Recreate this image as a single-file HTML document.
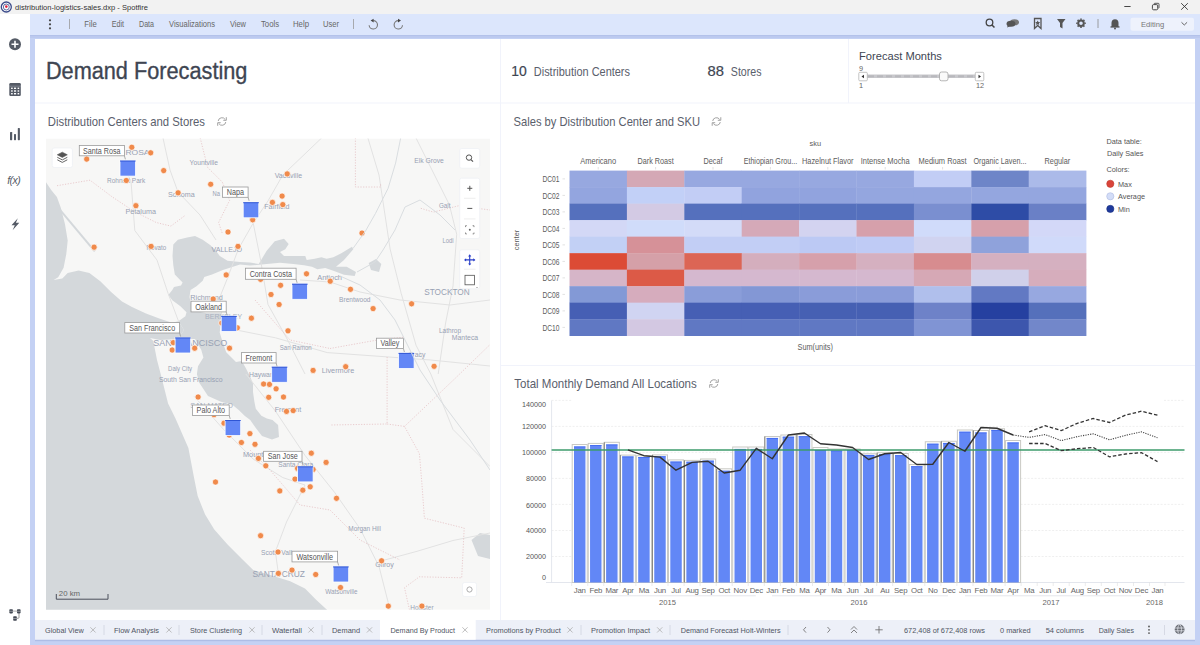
<!DOCTYPE html><html><head><meta charset="utf-8"><style>
html,body{margin:0;padding:0;width:1200px;height:645px;overflow:hidden;background:#fff;}
*{font-family:"Liberation Sans", sans-serif;}
svg{position:absolute;left:0;top:0;}
</style></head><body>
<svg width="1200" height="645" viewBox="0 0 1200 645" style="font-family:'Liberation Sans',sans-serif">
<rect x="0" y="0" width="1200" height="14" fill="#f2f2f2"/>
<rect x="0" y="14" width="30" height="631" fill="#ffffff"/>
<rect x="30" y="14" width="1170" height="21" fill="#dce6fc"/>
<rect x="30" y="35" width="1170" height="610" fill="#c4d1f4"/><rect x="30" y="35" width="1170" height="1.5" fill="#b3c2ea"/><rect x="30" y="36.5" width="1170" height="1.5" fill="#bccaef"/>
<rect x="35" y="39" width="1160" height="601" fill="#ffffff"/>
<circle cx="6.3" cy="7" r="5" fill="#fff" stroke="#3a4a8a" stroke-width="1.3"/>
<circle cx="6.3" cy="7" r="3" fill="none" stroke="#3a4a8a" stroke-width="0.8"/>
<circle cx="6.3" cy="6.6" r="1.3" fill="#e0203a"/>
<text x="15" y="10.2" font-size="8.1" fill="#333" text-anchor="start" font-weight="400" textLength="133" lengthAdjust="spacingAndGlyphs" >distribution-logistics-sales.dxp - Spotfire</text>
<line x1="1124.3" y1="6.5" x2="1130.6" y2="6.5" stroke="#333" stroke-width="0.9"/>
<rect x="1152.4" y="4.6" width="5.3" height="5.2" fill="none" stroke="#333" stroke-width="0.9" rx="1.2"/>
<path d="M1154 3.8 Q1154 3.3 1155 3.3 H1158.2 Q1159 3.3 1159 4.2 V7.5 Q1159 8.2 1158.3 8.2" fill="none" stroke="#333" stroke-width="0.8"/>
<path d="M1181.2 3.2 L1187.8 9.7 M1187.8 3.2 L1181.2 9.7" stroke="#333" stroke-width="0.9"/>
<circle cx="50" cy="20.3" r="1.1" fill="#444"/><circle cx="50" cy="24.3" r="1.1" fill="#444"/><circle cx="50" cy="28.3" r="1.1" fill="#444"/>
<line x1="69.5" y1="19" x2="69.5" y2="29" stroke="#999" stroke-width="0.8"/>
<text x="84.3" y="26.9" font-size="8.7" fill="#666" text-anchor="start" font-weight="400" textLength="12.4" lengthAdjust="spacingAndGlyphs" >File</text>
<text x="111.7" y="26.9" font-size="8.7" fill="#666" text-anchor="start" font-weight="400" textLength="12.3" lengthAdjust="spacingAndGlyphs" >Edit</text>
<text x="139" y="26.9" font-size="8.7" fill="#666" text-anchor="start" font-weight="400" textLength="15" lengthAdjust="spacingAndGlyphs" >Data</text>
<text x="169" y="26.9" font-size="8.7" fill="#666" text-anchor="start" font-weight="400" textLength="46" lengthAdjust="spacingAndGlyphs" >Visualizations</text>
<text x="230" y="26.9" font-size="8.7" fill="#666" text-anchor="start" font-weight="400" textLength="16" lengthAdjust="spacingAndGlyphs" >View</text>
<text x="261" y="26.9" font-size="8.7" fill="#666" text-anchor="start" font-weight="400" textLength="18" lengthAdjust="spacingAndGlyphs" >Tools</text>
<text x="293" y="26.9" font-size="8.7" fill="#666" text-anchor="start" font-weight="400" textLength="16" lengthAdjust="spacingAndGlyphs" >Help</text>
<text x="323" y="26.9" font-size="8.7" fill="#666" text-anchor="start" font-weight="400" textLength="16" lengthAdjust="spacingAndGlyphs" >User</text>
<line x1="353.5" y1="19" x2="353.5" y2="29" stroke="#999" stroke-width="0.8"/>
<path d="M373.3 20.6 A4.2 4.2 0 1 1 369.1 25.2" fill="none" stroke="#777" stroke-width="1.1"/><path d="M373.6 18.8 V22.4 L370.6 20.6 Z" fill="#444"/>
<path d="M398.3 20.6 A4.2 4.2 0 1 0 402.5 25.2" fill="none" stroke="#777" stroke-width="1.1"/><path d="M398 18.8 V22.4 L401 20.6 Z" fill="#444"/>
<circle cx="989.5" cy="22.5" r="3.3" fill="none" stroke="#444" stroke-width="1.3"/><line x1="992" y1="25" x2="994.5" y2="27.5" stroke="#444" stroke-width="1.5"/>
<ellipse cx="1014.5" cy="22.3" rx="4.5" ry="3" fill="#777"/><ellipse cx="1011" cy="23.8" rx="4.5" ry="3" fill="#555"/><path d="M1008 25 L1007 27.5 L1011 26" fill="#555"/>
<path d="M1034.5 18.5 H1041 V28.5 L1037.7 25.5 L1034.5 28.5 Z" fill="none" stroke="#555" stroke-width="1.3"/><path d="M1037.7 20.5 l0.8 1.6 1.7 0.2 -1.3 1.1 0.4 1.7 -1.6 -0.9 -1.6 0.9 0.4 -1.7 -1.3 -1.1 1.7 -0.2z" fill="#555"/>
<path d="M1057 19 H1065.5 L1062.5 23 V28.5 L1060 27 V23 Z" fill="#555"/>
<circle cx="1081" cy="23.3" r="2.8" fill="none" stroke="#555" stroke-width="2"/>
<line x1="1084.50" y1="23.30" x2="1085.80" y2="23.30" stroke="#555" stroke-width="1.6"/>
<line x1="1083.47" y1="25.77" x2="1084.39" y2="26.69" stroke="#555" stroke-width="1.6"/>
<line x1="1081.00" y1="26.80" x2="1081.00" y2="28.10" stroke="#555" stroke-width="1.6"/>
<line x1="1078.53" y1="25.77" x2="1077.61" y2="26.69" stroke="#555" stroke-width="1.6"/>
<line x1="1077.50" y1="23.30" x2="1076.20" y2="23.30" stroke="#555" stroke-width="1.6"/>
<line x1="1078.53" y1="20.83" x2="1077.61" y2="19.91" stroke="#555" stroke-width="1.6"/>
<line x1="1081.00" y1="19.80" x2="1081.00" y2="18.50" stroke="#555" stroke-width="1.6"/>
<line x1="1083.47" y1="20.83" x2="1084.39" y2="19.91" stroke="#555" stroke-width="1.6"/>
<line x1="1098" y1="19" x2="1098" y2="28" stroke="#888" stroke-width="0.8"/>
<path d="M1111.5 27 V23 A3.5 3.8 0 0 1 1118.5 23 V27 Z" fill="#555"/><rect x="1110.5" y="26.3" width="9" height="1.3" fill="#555"/><circle cx="1115" cy="28.5" r="1" fill="#555"/>
<rect x="1130.5" y="17.7" width="63.5" height="13" rx="2" fill="#eef2fc"/>
<text x="1141" y="26.6" font-size="7.6" fill="#777" text-anchor="start" font-weight="400" >Editing</text>
<path d="M1181.5 22.3 L1184.3 25 L1187.1 22.3" fill="none" stroke="#555" stroke-width="0.9"/>
<circle cx="15" cy="44.3" r="6" fill="#555b66"/><path d="M15 40.8 V47.8 M11.5 44.3 H18.5" stroke="#fff" stroke-width="1.6"/>
<rect x="9.3" y="83" width="11.5" height="13" rx="1.2" fill="#555b66"/><rect x="9.3" y="85.8" width="11.5" height="0.6" fill="#9aa0aa"/>
<rect x="11.1" y="87.6" width="1.6" height="1.4" fill="#fff"/>
<rect x="14" y="87.6" width="2.1" height="1.4" fill="#fff"/>
<rect x="17.6" y="87.6" width="1.6" height="1.4" fill="#fff"/>
<rect x="11.1" y="90.3" width="1.6" height="1.4" fill="#fff"/>
<rect x="14" y="90.3" width="2.1" height="1.4" fill="#fff"/>
<rect x="17.6" y="90.3" width="1.6" height="1.4" fill="#fff"/>
<rect x="11.1" y="93" width="1.6" height="1.4" fill="#fff"/>
<rect x="14" y="93" width="2.1" height="1.4" fill="#fff"/>
<rect x="17.6" y="93" width="1.6" height="1.4" fill="#fff"/>
<rect x="10" y="132" width="2.2" height="8.2" rx="0.6" fill="#555b66"/><rect x="14" y="134.1" width="2" height="6.1" rx="0.6" fill="#555b66"/><rect x="17.8" y="128.1" width="2.1" height="12.1" rx="0.6" fill="#555b66"/>
<text x="7.3" y="183.5" font-size="10.5" font-style="italic" fill="#555b66" font-family="Liberation Serif" letter-spacing="-0.6">f(x)</text>
<path d="M17.8 218.3 L11.5 225.3 H14.8 L12.6 230.2 L19.3 222.8 H15.9 Z" fill="#555b66"/>
<rect x="9.3" y="609.2" width="3.6" height="4.2" rx="0.8" fill="#444a55"/><rect x="17" y="609.2" width="3.6" height="4.2" rx="0.8" fill="#444a55"/><rect x="13.2" y="616.3" width="3.6" height="4.4" rx="0.8" fill="#444a55"/><path d="M12.9 611.2 H17 M19 613.4 V617.5 Q19 618.3 18 618.3 H16.8" stroke="#555" stroke-width="0.6" fill="none"/><path d="M9.3 611.3 H20.6 M13.2 618.5 H16.8" stroke="#fff" stroke-width="0.4"/>
<rect x="35" y="102.5" width="1160" height="1" fill="#f1f3fb"/>
<rect x="500" y="39" width="1" height="581" fill="#f1f3fb"/>
<rect x="848" y="39" width="1" height="64" fill="#f1f3fb"/>
<rect x="501" y="365" width="694" height="1" fill="#f1f3fb"/>
<text x="45.9" y="78.7" font-size="23.5" fill="#3e4552" text-anchor="start" font-weight="400" textLength="201.5" lengthAdjust="spacingAndGlyphs" stroke="#3e4552" stroke-width="0.35">Demand Forecasting</text>
<text x="511.3" y="75.8" font-size="14.5" fill="#3e4552" text-anchor="start" font-weight="400" textLength="15.5" lengthAdjust="spacingAndGlyphs" stroke="#3e4552" stroke-width="0.2">10</text>
<text x="533.8" y="75.8" font-size="13" fill="#5a606c" text-anchor="start" font-weight="400" textLength="96.2" lengthAdjust="spacingAndGlyphs" >Distribution Centers</text>
<text x="707.6" y="75.8" font-size="14.5" fill="#3e4552" text-anchor="start" font-weight="400" textLength="16.4" lengthAdjust="spacingAndGlyphs" stroke="#3e4552" stroke-width="0.2">88</text>
<text x="730.8" y="75.8" font-size="13" fill="#5a606c" text-anchor="start" font-weight="400" textLength="30.7" lengthAdjust="spacingAndGlyphs" >Stores</text>
<text x="859" y="60" font-size="11.6" fill="#3e4552" text-anchor="start" font-weight="400" textLength="82.9" lengthAdjust="spacingAndGlyphs" >Forecast Months</text>
<text x="859" y="71" font-size="7.3" fill="#666" text-anchor="start" font-weight="400" >9</text>
<rect x="867" y="74.5" width="108" height="3.5" fill="#c8c8cc"/>
<rect x="868.0" y="75.3" width="6" height="2" fill="#b8b8bd"/>
<rect x="877.0" y="75.3" width="6" height="2" fill="#b8b8bd"/>
<rect x="886.0" y="75.3" width="6" height="2" fill="#b8b8bd"/>
<rect x="895.0" y="75.3" width="6" height="2" fill="#b8b8bd"/>
<rect x="904.0" y="75.3" width="6" height="2" fill="#b8b8bd"/>
<rect x="913.0" y="75.3" width="6" height="2" fill="#b8b8bd"/>
<rect x="922.0" y="75.3" width="6" height="2" fill="#b8b8bd"/>
<rect x="931.0" y="75.3" width="6" height="2" fill="#b8b8bd"/>
<rect x="940.0" y="75.3" width="6" height="2" fill="#b8b8bd"/>
<rect x="949.0" y="75.3" width="6" height="2" fill="#b8b8bd"/>
<rect x="958.0" y="75.3" width="6" height="2" fill="#b8b8bd"/>
<rect x="967.0" y="75.3" width="6" height="2" fill="#b8b8bd"/>
<rect x="858.8" y="72.3" width="8.5" height="8.5" rx="1" fill="#fff" stroke="#aaa" stroke-width="0.7"/><path d="M864 74.8 L861.5 76.5 L864 78.2 Z" fill="#333"/>
<rect x="975.3" y="72.3" width="8.5" height="8.5" rx="1" fill="#fff" stroke="#aaa" stroke-width="0.7"/><path d="M978.5 74.8 L981 76.5 L978.5 78.2 Z" fill="#333"/>
<rect x="939.5" y="72" width="8.5" height="8.8" rx="2" fill="#fafafa" stroke="#999" stroke-width="0.7"/>
<text x="859" y="88" font-size="7.3" fill="#666" text-anchor="start" font-weight="400" >1</text>
<text x="976" y="88" font-size="7.3" fill="#666" text-anchor="start" font-weight="400" >12</text>
<text x="47.8" y="125.7" font-size="13" fill="#5a606c" text-anchor="start" font-weight="400" textLength="157.2" lengthAdjust="spacingAndGlyphs" >Distribution Centers and Stores</text>
<path d="M218.2 121.0 A3.8 3.8 0 0 1 225.2 119.5" fill="none" stroke="#999" stroke-width="0.9"/><path d="M225.8 122.0 A3.8 3.8 0 0 1 218.8 123.5" fill="none" stroke="#999" stroke-width="0.9"/><path d="M226.3 117.2 V120.3 H223.3" fill="none" stroke="#999" stroke-width="0.9"/><path d="M217.7 125.8 V122.7 H220.7" fill="none" stroke="#999" stroke-width="0.9"/>
<text x="513.5" y="125.7" font-size="13" fill="#5a606c" text-anchor="start" font-weight="400" textLength="186.5" lengthAdjust="spacingAndGlyphs" >Sales by Distribution Center and SKU</text>
<path d="M712.7 121.0 A3.8 3.8 0 0 1 719.7 119.5" fill="none" stroke="#999" stroke-width="0.9"/><path d="M720.3 122.0 A3.8 3.8 0 0 1 713.3 123.5" fill="none" stroke="#999" stroke-width="0.9"/><path d="M720.8 117.2 V120.3 H717.8" fill="none" stroke="#999" stroke-width="0.9"/><path d="M712.2 125.8 V122.7 H715.2" fill="none" stroke="#999" stroke-width="0.9"/>
<text x="514.3" y="387.5" font-size="13.4" fill="#5a606c" text-anchor="start" font-weight="400" textLength="182.5" lengthAdjust="spacingAndGlyphs" >Total Monthly Demand All Locations</text>
<path d="M710.2 383.0 A3.8 3.8 0 0 1 717.2 381.5" fill="none" stroke="#999" stroke-width="0.9"/><path d="M717.8 384.0 A3.8 3.8 0 0 1 710.8 385.5" fill="none" stroke="#999" stroke-width="0.9"/><path d="M718.3 379.2 V382.3 H715.3" fill="none" stroke="#999" stroke-width="0.9"/><path d="M709.7 387.8 V384.7 H712.7" fill="none" stroke="#999" stroke-width="0.9"/>
<rect x="569.50" y="170.60" width="57.70" height="16.81" fill="#97a8e0"/>
<rect x="626.90" y="170.60" width="57.70" height="16.81" fill="#d4a8b5"/>
<rect x="684.30" y="170.60" width="57.70" height="16.81" fill="#97a8e0"/>
<rect x="741.70" y="170.60" width="57.70" height="16.81" fill="#97a8e0"/>
<rect x="799.10" y="170.60" width="57.70" height="16.81" fill="#97a8e0"/>
<rect x="856.50" y="170.60" width="57.70" height="16.81" fill="#97a8e0"/>
<rect x="913.90" y="170.60" width="57.70" height="16.81" fill="#c2cdf5"/>
<rect x="971.30" y="170.60" width="57.70" height="16.81" fill="#6e85c8"/>
<rect x="1028.70" y="170.60" width="57.70" height="16.81" fill="#abbae9"/>
<rect x="569.50" y="187.11" width="57.70" height="16.81" fill="#93a5df"/>
<rect x="626.90" y="187.11" width="57.70" height="16.81" fill="#c2d0f7"/>
<rect x="684.30" y="187.11" width="57.70" height="16.81" fill="#c2cdf5"/>
<rect x="741.70" y="187.11" width="57.70" height="16.81" fill="#91a3de"/>
<rect x="799.10" y="187.11" width="57.70" height="16.81" fill="#91a3de"/>
<rect x="856.50" y="187.11" width="57.70" height="16.81" fill="#94a6df"/>
<rect x="913.90" y="187.11" width="57.70" height="16.81" fill="#94a6df"/>
<rect x="971.30" y="187.11" width="57.70" height="16.81" fill="#94a6df"/>
<rect x="1028.70" y="187.11" width="57.70" height="16.81" fill="#94a6df"/>
<rect x="569.50" y="203.62" width="57.70" height="16.81" fill="#5570bd"/>
<rect x="626.90" y="203.62" width="57.70" height="16.81" fill="#d3cae4"/>
<rect x="684.30" y="203.62" width="57.70" height="16.81" fill="#5570bd"/>
<rect x="741.70" y="203.62" width="57.70" height="16.81" fill="#5570bd"/>
<rect x="799.10" y="203.62" width="57.70" height="16.81" fill="#5570bd"/>
<rect x="856.50" y="203.62" width="57.70" height="16.81" fill="#5570bd"/>
<rect x="913.90" y="203.62" width="57.70" height="16.81" fill="#7a8fd0"/>
<rect x="971.30" y="203.62" width="57.70" height="16.81" fill="#2e4ca6"/>
<rect x="1028.70" y="203.62" width="57.70" height="16.81" fill="#6a80c6"/>
<rect x="569.50" y="220.13" width="57.70" height="16.81" fill="#d3d8f6"/>
<rect x="626.90" y="220.13" width="57.70" height="16.81" fill="#d0dcfa"/>
<rect x="684.30" y="220.13" width="57.70" height="16.81" fill="#d3dbf8"/>
<rect x="741.70" y="220.13" width="57.70" height="16.81" fill="#d5a9b8"/>
<rect x="799.10" y="220.13" width="57.70" height="16.81" fill="#d3d3f0"/>
<rect x="856.50" y="220.13" width="57.70" height="16.81" fill="#d6a0ab"/>
<rect x="913.90" y="220.13" width="57.70" height="16.81" fill="#d0dbfa"/>
<rect x="971.30" y="220.13" width="57.70" height="16.81" fill="#d6a0ab"/>
<rect x="1028.70" y="220.13" width="57.70" height="16.81" fill="#d3d8f8"/>
<rect x="569.50" y="236.64" width="57.70" height="16.81" fill="#c2d0f5"/>
<rect x="626.90" y="236.64" width="57.70" height="16.81" fill="#d69198"/>
<rect x="684.30" y="236.64" width="57.70" height="16.81" fill="#c2cef5"/>
<rect x="741.70" y="236.64" width="57.70" height="16.81" fill="#c2cef5"/>
<rect x="799.10" y="236.64" width="57.70" height="16.81" fill="#bcc9f4"/>
<rect x="856.50" y="236.64" width="57.70" height="16.81" fill="#bfcbf5"/>
<rect x="913.90" y="236.64" width="57.70" height="16.81" fill="#d0d3f0"/>
<rect x="971.30" y="236.64" width="57.70" height="16.81" fill="#8fa2db"/>
<rect x="1028.70" y="236.64" width="57.70" height="16.81" fill="#d0dafa"/>
<rect x="569.50" y="253.15" width="57.70" height="16.81" fill="#dc4b35"/>
<rect x="626.90" y="253.15" width="57.70" height="16.81" fill="#d5a0a8"/>
<rect x="684.30" y="253.15" width="57.70" height="16.81" fill="#dc6555"/>
<rect x="741.70" y="253.15" width="57.70" height="16.81" fill="#d4aebd"/>
<rect x="799.10" y="253.15" width="57.70" height="16.81" fill="#d6a0ab"/>
<rect x="856.50" y="253.15" width="57.70" height="16.81" fill="#d5b0c0"/>
<rect x="913.90" y="253.15" width="57.70" height="16.81" fill="#d78c8f"/>
<rect x="971.30" y="253.15" width="57.70" height="16.81" fill="#d5b0c0"/>
<rect x="1028.70" y="253.15" width="57.70" height="16.81" fill="#d5b0c0"/>
<rect x="569.50" y="269.66" width="57.70" height="16.81" fill="#d6b5c8"/>
<rect x="626.90" y="269.66" width="57.70" height="16.81" fill="#dc5a47"/>
<rect x="684.30" y="269.66" width="57.70" height="16.81" fill="#d5b8cf"/>
<rect x="741.70" y="269.66" width="57.70" height="16.81" fill="#d5b8cf"/>
<rect x="799.10" y="269.66" width="57.70" height="16.81" fill="#d5b8cf"/>
<rect x="856.50" y="269.66" width="57.70" height="16.81" fill="#d5b8cf"/>
<rect x="913.90" y="269.66" width="57.70" height="16.81" fill="#d6a8b5"/>
<rect x="971.30" y="269.66" width="57.70" height="16.81" fill="#d0d0ea"/>
<rect x="1028.70" y="269.66" width="57.70" height="16.81" fill="#d6adbc"/>
<rect x="569.50" y="286.17" width="57.70" height="16.81" fill="#8399d6"/>
<rect x="626.90" y="286.17" width="57.70" height="16.81" fill="#d6acbd"/>
<rect x="684.30" y="286.17" width="57.70" height="16.81" fill="#8a9dd9"/>
<rect x="741.70" y="286.17" width="57.70" height="16.81" fill="#8397d5"/>
<rect x="799.10" y="286.17" width="57.70" height="16.81" fill="#8a9cd9"/>
<rect x="856.50" y="286.17" width="57.70" height="16.81" fill="#8a9cd9"/>
<rect x="913.90" y="286.17" width="57.70" height="16.81" fill="#b0bfec"/>
<rect x="971.30" y="286.17" width="57.70" height="16.81" fill="#6279c3"/>
<rect x="1028.70" y="286.17" width="57.70" height="16.81" fill="#97a8e0"/>
<rect x="569.50" y="302.68" width="57.70" height="16.81" fill="#465fb4"/>
<rect x="626.90" y="302.68" width="57.70" height="16.81" fill="#d0d4f2"/>
<rect x="684.30" y="302.68" width="57.70" height="16.81" fill="#465fb4"/>
<rect x="741.70" y="302.68" width="57.70" height="16.81" fill="#465fb4"/>
<rect x="799.10" y="302.68" width="57.70" height="16.81" fill="#4660b3"/>
<rect x="856.50" y="302.68" width="57.70" height="16.81" fill="#4660b3"/>
<rect x="913.90" y="302.68" width="57.70" height="16.81" fill="#6e82c8"/>
<rect x="971.30" y="302.68" width="57.70" height="16.81" fill="#2540a0"/>
<rect x="1028.70" y="302.68" width="57.70" height="16.81" fill="#5570bb"/>
<rect x="569.50" y="319.19" width="57.70" height="16.81" fill="#6078c3"/>
<rect x="626.90" y="319.19" width="57.70" height="16.81" fill="#d3c8e2"/>
<rect x="684.30" y="319.19" width="57.70" height="16.81" fill="#6078c3"/>
<rect x="741.70" y="319.19" width="57.70" height="16.81" fill="#6078c3"/>
<rect x="799.10" y="319.19" width="57.70" height="16.81" fill="#6078c3"/>
<rect x="856.50" y="319.19" width="57.70" height="16.81" fill="#6078c3"/>
<rect x="913.90" y="319.19" width="57.70" height="16.81" fill="#8094d4"/>
<rect x="971.30" y="319.19" width="57.70" height="16.81" fill="#3d56ad"/>
<rect x="1028.70" y="319.19" width="57.70" height="16.81" fill="#7287ca"/>
<text x="598.2" y="164.4" font-size="8.2" fill="#5c5c5c" text-anchor="middle" font-weight="400" textLength="36" lengthAdjust="spacingAndGlyphs" >Americano</text>
<line x1="598.2" y1="167" x2="598.2" y2="169.5" stroke="#ccc" stroke-width="0.6"/>
<text x="655.6" y="164.4" font-size="8.2" fill="#5c5c5c" text-anchor="middle" font-weight="400" textLength="36.3" lengthAdjust="spacingAndGlyphs" >Dark Roast</text>
<line x1="655.6" y1="167" x2="655.6" y2="169.5" stroke="#ccc" stroke-width="0.6"/>
<text x="713.0" y="164.4" font-size="8.2" fill="#5c5c5c" text-anchor="middle" font-weight="400" textLength="19" lengthAdjust="spacingAndGlyphs" >Decaf</text>
<line x1="713.0" y1="167" x2="713.0" y2="169.5" stroke="#ccc" stroke-width="0.6"/>
<text x="770.4" y="164.4" font-size="8.2" fill="#5c5c5c" text-anchor="middle" font-weight="400" textLength="53.5" lengthAdjust="spacingAndGlyphs" >Ethiopian Grou...</text>
<line x1="770.4" y1="167" x2="770.4" y2="169.5" stroke="#ccc" stroke-width="0.6"/>
<text x="827.8" y="164.4" font-size="8.2" fill="#5c5c5c" text-anchor="middle" font-weight="400" textLength="51.5" lengthAdjust="spacingAndGlyphs" >Hazelnut Flavor</text>
<line x1="827.8" y1="167" x2="827.8" y2="169.5" stroke="#ccc" stroke-width="0.6"/>
<text x="885.2" y="164.4" font-size="8.2" fill="#5c5c5c" text-anchor="middle" font-weight="400" textLength="49" lengthAdjust="spacingAndGlyphs" >Intense Mocha</text>
<line x1="885.2" y1="167" x2="885.2" y2="169.5" stroke="#ccc" stroke-width="0.6"/>
<text x="942.6" y="164.4" font-size="8.2" fill="#5c5c5c" text-anchor="middle" font-weight="400" textLength="48" lengthAdjust="spacingAndGlyphs" >Medium Roast</text>
<line x1="942.6" y1="167" x2="942.6" y2="169.5" stroke="#ccc" stroke-width="0.6"/>
<text x="1000.0" y="164.4" font-size="8.2" fill="#5c5c5c" text-anchor="middle" font-weight="400" textLength="53" lengthAdjust="spacingAndGlyphs" >Organic Laven...</text>
<line x1="1000.0" y1="167" x2="1000.0" y2="169.5" stroke="#ccc" stroke-width="0.6"/>
<text x="1057.4" y="164.4" font-size="8.2" fill="#5c5c5c" text-anchor="middle" font-weight="400" textLength="25.7" lengthAdjust="spacingAndGlyphs" >Regular</text>
<line x1="1057.4" y1="167" x2="1057.4" y2="169.5" stroke="#ccc" stroke-width="0.6"/>
<text x="559.5" y="182.0" font-size="8.5" fill="#5c5c5c" text-anchor="end" font-weight="400" textLength="17" lengthAdjust="spacingAndGlyphs" >DC01</text>
<line x1="562.5" y1="178.9" x2="565" y2="178.9" stroke="#ccc" stroke-width="0.6"/>
<text x="559.5" y="198.5" font-size="8.5" fill="#5c5c5c" text-anchor="end" font-weight="400" textLength="17" lengthAdjust="spacingAndGlyphs" >DC02</text>
<line x1="562.5" y1="195.4" x2="565" y2="195.4" stroke="#ccc" stroke-width="0.6"/>
<text x="559.5" y="215.0" font-size="8.5" fill="#5c5c5c" text-anchor="end" font-weight="400" textLength="17" lengthAdjust="spacingAndGlyphs" >DC03</text>
<line x1="562.5" y1="211.9" x2="565" y2="211.9" stroke="#ccc" stroke-width="0.6"/>
<text x="559.5" y="231.5" font-size="8.5" fill="#5c5c5c" text-anchor="end" font-weight="400" textLength="17" lengthAdjust="spacingAndGlyphs" >DC04</text>
<line x1="562.5" y1="228.4" x2="565" y2="228.4" stroke="#ccc" stroke-width="0.6"/>
<text x="559.5" y="248.0" font-size="8.5" fill="#5c5c5c" text-anchor="end" font-weight="400" textLength="17" lengthAdjust="spacingAndGlyphs" >DC05</text>
<line x1="562.5" y1="244.9" x2="565" y2="244.9" stroke="#ccc" stroke-width="0.6"/>
<text x="559.5" y="264.6" font-size="8.5" fill="#5c5c5c" text-anchor="end" font-weight="400" textLength="17" lengthAdjust="spacingAndGlyphs" >DC06</text>
<line x1="562.5" y1="261.4" x2="565" y2="261.4" stroke="#ccc" stroke-width="0.6"/>
<text x="559.5" y="281.1" font-size="8.5" fill="#5c5c5c" text-anchor="end" font-weight="400" textLength="17" lengthAdjust="spacingAndGlyphs" >DC07</text>
<line x1="562.5" y1="277.9" x2="565" y2="277.9" stroke="#ccc" stroke-width="0.6"/>
<text x="559.5" y="297.6" font-size="8.5" fill="#5c5c5c" text-anchor="end" font-weight="400" textLength="17" lengthAdjust="spacingAndGlyphs" >DC08</text>
<line x1="562.5" y1="294.4" x2="565" y2="294.4" stroke="#ccc" stroke-width="0.6"/>
<text x="559.5" y="314.1" font-size="8.5" fill="#5c5c5c" text-anchor="end" font-weight="400" textLength="17" lengthAdjust="spacingAndGlyphs" >DC09</text>
<line x1="562.5" y1="310.9" x2="565" y2="310.9" stroke="#ccc" stroke-width="0.6"/>
<text x="559.5" y="330.6" font-size="8.5" fill="#5c5c5c" text-anchor="end" font-weight="400" textLength="17" lengthAdjust="spacingAndGlyphs" >DC10</text>
<line x1="562.5" y1="327.4" x2="565" y2="327.4" stroke="#ccc" stroke-width="0.6"/>
<text x="815.3" y="146.1" font-size="8" fill="#5c5c5c" text-anchor="middle" font-weight="400" textLength="11.5" lengthAdjust="spacingAndGlyphs" >sku</text>
<text x="815.2" y="350.3" font-size="8.7" fill="#5c5c5c" text-anchor="middle" font-weight="400" textLength="35.4" lengthAdjust="spacingAndGlyphs" >Sum(units)</text>
<text x="0" y="0" font-size="7.3" fill="#555" text-anchor="middle" transform="translate(518.5,240) rotate(-90)">center</text>
<text x="1106.5" y="143.8" font-size="7.3" fill="#555" text-anchor="start" font-weight="400" >Data table:</text>
<text x="1107" y="155.6" font-size="7.3" fill="#555" text-anchor="start" font-weight="400" >Daily Sales</text>
<text x="1106.5" y="171.6" font-size="7.3" fill="#555" text-anchor="start" font-weight="400" >Colors:</text>
<circle cx="1110.3" cy="183.8" r="3.6" fill="#d9443a" stroke="#c0392b" stroke-width="0.6"/>
<circle cx="1110.3" cy="196.3" r="3.6" fill="#d3ddf8" stroke="#aebbe0" stroke-width="0.6"/>
<circle cx="1110.3" cy="208.9" r="3.6" fill="#1f3a9c" stroke="#1a2f80" stroke-width="0.6"/>
<text x="1118" y="186.5" font-size="7.3" fill="#555" text-anchor="start" font-weight="400" >Max</text>
<text x="1118" y="199" font-size="7.3" fill="#555" text-anchor="start" font-weight="400" >Average</text>
<text x="1118" y="211.6" font-size="7.3" fill="#555" text-anchor="start" font-weight="400" >Min</text>
<line x1="551.6" y1="556.5" x2="1184.5" y2="556.5" stroke="#e4e4e4" stroke-width="0.6" stroke-dasharray="2,1.5"/>
<line x1="551.6" y1="530.5" x2="1184.5" y2="530.5" stroke="#e4e4e4" stroke-width="0.6" stroke-dasharray="2,1.5"/>
<line x1="551.6" y1="504.4" x2="1184.5" y2="504.4" stroke="#e4e4e4" stroke-width="0.6" stroke-dasharray="2,1.5"/>
<line x1="551.6" y1="478.4" x2="1184.5" y2="478.4" stroke="#e4e4e4" stroke-width="0.6" stroke-dasharray="2,1.5"/>
<line x1="551.6" y1="452.4" x2="1184.5" y2="452.4" stroke="#e4e4e4" stroke-width="0.6" stroke-dasharray="2,1.5"/>
<line x1="551.6" y1="426.4" x2="1184.5" y2="426.4" stroke="#e4e4e4" stroke-width="0.6" stroke-dasharray="2,1.5"/>
<line x1="551.6" y1="400.4" x2="572" y2="400.4" stroke="#e4e4e4" stroke-width="0.6" stroke-dasharray="2,1.5"/><line x1="1164" y1="400.4" x2="1184.5" y2="400.4" stroke="#e4e4e4" stroke-width="0.6" stroke-dasharray="2,1.5"/>
<line x1="551.6" y1="400.5" x2="551.6" y2="582.5" stroke="#dcdfe8" stroke-width="0.8"/>
<line x1="546" y1="582.5" x2="1184.5" y2="582.5" stroke="#dcdfe8" stroke-width="0.8"/>
<text x="546" y="406.8" font-size="7.2" fill="#555" text-anchor="end" font-weight="400" >140000</text>
<text x="546" y="429.0" font-size="7.2" fill="#555" text-anchor="end" font-weight="400" >120000</text>
<text x="546" y="454.9" font-size="7.2" fill="#555" text-anchor="end" font-weight="400" >100000</text>
<text x="546" y="481.2" font-size="7.2" fill="#555" text-anchor="end" font-weight="400" >80000</text>
<text x="546" y="507.5" font-size="7.2" fill="#555" text-anchor="end" font-weight="400" >60000</text>
<text x="546" y="533.4" font-size="7.2" fill="#555" text-anchor="end" font-weight="400" >40000</text>
<text x="546" y="559.0" font-size="7.2" fill="#555" text-anchor="end" font-weight="400" >20000</text>
<text x="546" y="580.1" font-size="7.2" fill="#555" text-anchor="end" font-weight="400" >0</text>
<rect x="572.20" y="444.50" width="15.05" height="138.00" fill="#fff" stroke="#c9c9c4" stroke-width="1"/>
<rect x="574.00" y="446.50" width="11.45" height="136.00" fill="#6287f6"/>
<line x1="574.00" y1="446.90" x2="585.45" y2="446.90" stroke="#3d66f0" stroke-width="0.8"/>
<rect x="588.25" y="443.40" width="15.05" height="139.10" fill="#fff" stroke="#c9c9c4" stroke-width="1"/>
<rect x="590.05" y="445.10" width="11.45" height="137.40" fill="#6287f6"/>
<line x1="590.05" y1="445.50" x2="601.50" y2="445.50" stroke="#3d66f0" stroke-width="0.8"/>
<rect x="604.30" y="442.30" width="15.05" height="140.20" fill="#fff" stroke="#c9c9c4" stroke-width="1"/>
<rect x="606.10" y="444.50" width="11.45" height="138.00" fill="#6287f6"/>
<line x1="606.10" y1="444.90" x2="617.55" y2="444.90" stroke="#3d66f0" stroke-width="0.8"/>
<line x1="604.30" y1="442.30" x2="604.30" y2="582.50" stroke="#85857f" stroke-width="1"/>
<rect x="620.35" y="455.10" width="15.05" height="127.40" fill="#fff" stroke="#c9c9c4" stroke-width="1"/>
<rect x="622.15" y="456.50" width="11.45" height="126.00" fill="#6287f6"/>
<line x1="622.15" y1="456.90" x2="633.60" y2="456.90" stroke="#3d66f0" stroke-width="0.8"/>
<line x1="620.35" y1="455.10" x2="620.35" y2="582.50" stroke="#85857f" stroke-width="1"/>
<rect x="636.40" y="455.70" width="15.05" height="126.80" fill="#fff" stroke="#c9c9c4" stroke-width="1"/>
<rect x="638.20" y="457.10" width="11.45" height="125.40" fill="#6287f6"/>
<line x1="638.20" y1="457.50" x2="649.65" y2="457.50" stroke="#3d66f0" stroke-width="0.8"/>
<rect x="652.45" y="454.90" width="15.05" height="127.60" fill="#fff" stroke="#c9c9c4" stroke-width="1"/>
<rect x="654.25" y="456.30" width="11.45" height="126.20" fill="#6287f6"/>
<line x1="654.25" y1="456.70" x2="665.70" y2="456.70" stroke="#3d66f0" stroke-width="0.8"/>
<line x1="652.45" y1="454.90" x2="652.45" y2="582.50" stroke="#85857f" stroke-width="1"/>
<rect x="668.50" y="459.90" width="15.05" height="122.60" fill="#fff" stroke="#c9c9c4" stroke-width="1"/>
<rect x="670.30" y="461.60" width="11.45" height="120.90" fill="#6287f6"/>
<line x1="670.30" y1="462.00" x2="681.75" y2="462.00" stroke="#3d66f0" stroke-width="0.8"/>
<rect x="684.55" y="460.40" width="15.05" height="122.10" fill="#fff" stroke="#c9c9c4" stroke-width="1"/>
<rect x="686.35" y="461.80" width="11.45" height="120.70" fill="#6287f6"/>
<line x1="686.35" y1="462.20" x2="697.80" y2="462.20" stroke="#3d66f0" stroke-width="0.8"/>
<line x1="684.55" y1="460.40" x2="684.55" y2="582.50" stroke="#85857f" stroke-width="1"/>
<rect x="700.60" y="459.00" width="15.05" height="123.50" fill="#fff" stroke="#c9c9c4" stroke-width="1"/>
<rect x="702.40" y="460.70" width="11.45" height="121.80" fill="#6287f6"/>
<line x1="702.40" y1="461.10" x2="713.85" y2="461.10" stroke="#3d66f0" stroke-width="0.8"/>
<rect x="716.65" y="468.80" width="15.05" height="113.70" fill="#fff" stroke="#c9c9c4" stroke-width="1"/>
<rect x="718.45" y="470.80" width="11.45" height="111.70" fill="#6287f6"/>
<line x1="718.45" y1="471.20" x2="729.90" y2="471.20" stroke="#3d66f0" stroke-width="0.8"/>
<line x1="716.65" y1="468.80" x2="716.65" y2="582.50" stroke="#85857f" stroke-width="1"/>
<rect x="732.70" y="447.00" width="15.05" height="135.50" fill="#fff" stroke="#c9c9c4" stroke-width="1"/>
<rect x="734.50" y="449.00" width="11.45" height="133.50" fill="#6287f6"/>
<line x1="734.50" y1="449.40" x2="745.95" y2="449.40" stroke="#3d66f0" stroke-width="0.8"/>
<rect x="748.75" y="447.00" width="15.05" height="135.50" fill="#fff" stroke="#c9c9c4" stroke-width="1"/>
<rect x="750.55" y="449.00" width="11.45" height="133.50" fill="#6287f6"/>
<line x1="750.55" y1="449.40" x2="762.00" y2="449.40" stroke="#3d66f0" stroke-width="0.8"/>
<rect x="764.80" y="436.50" width="15.05" height="146.00" fill="#fff" stroke="#c9c9c4" stroke-width="1"/>
<rect x="766.60" y="438.00" width="11.45" height="144.50" fill="#6287f6"/>
<line x1="766.60" y1="438.40" x2="778.05" y2="438.40" stroke="#3d66f0" stroke-width="0.8"/>
<line x1="764.80" y1="436.50" x2="764.80" y2="582.50" stroke="#85857f" stroke-width="1"/>
<rect x="780.85" y="435.00" width="15.05" height="147.50" fill="#fff" stroke="#c9c9c4" stroke-width="1"/>
<rect x="782.65" y="436.75" width="11.45" height="145.75" fill="#6287f6"/>
<line x1="782.65" y1="437.15" x2="794.10" y2="437.15" stroke="#3d66f0" stroke-width="0.8"/>
<rect x="796.90" y="434.50" width="15.05" height="148.00" fill="#fff" stroke="#c9c9c4" stroke-width="1"/>
<rect x="798.70" y="436.25" width="11.45" height="146.25" fill="#6287f6"/>
<line x1="798.70" y1="436.65" x2="810.15" y2="436.65" stroke="#3d66f0" stroke-width="0.8"/>
<line x1="796.90" y1="434.50" x2="796.90" y2="582.50" stroke="#85857f" stroke-width="1"/>
<rect x="812.95" y="447.50" width="15.05" height="135.00" fill="#fff" stroke="#c9c9c4" stroke-width="1"/>
<rect x="814.75" y="450.00" width="11.45" height="132.50" fill="#6287f6"/>
<line x1="814.75" y1="450.40" x2="826.20" y2="450.40" stroke="#3d66f0" stroke-width="0.8"/>
<rect x="829.00" y="449.00" width="15.05" height="133.50" fill="#fff" stroke="#c9c9c4" stroke-width="1"/>
<rect x="830.80" y="450.50" width="11.45" height="132.00" fill="#6287f6"/>
<line x1="830.80" y1="450.90" x2="842.25" y2="450.90" stroke="#3d66f0" stroke-width="0.8"/>
<rect x="845.05" y="449.00" width="15.05" height="133.50" fill="#fff" stroke="#c9c9c4" stroke-width="1"/>
<rect x="846.85" y="450.00" width="11.45" height="132.50" fill="#6287f6"/>
<line x1="846.85" y1="450.40" x2="858.30" y2="450.40" stroke="#3d66f0" stroke-width="0.8"/>
<rect x="861.10" y="453.75" width="15.05" height="128.75" fill="#fff" stroke="#c9c9c4" stroke-width="1"/>
<rect x="862.90" y="455.00" width="11.45" height="127.50" fill="#6287f6"/>
<line x1="862.90" y1="455.40" x2="874.35" y2="455.40" stroke="#3d66f0" stroke-width="0.8"/>
<line x1="861.10" y1="453.75" x2="861.10" y2="582.50" stroke="#85857f" stroke-width="1"/>
<rect x="877.15" y="452.75" width="15.05" height="129.75" fill="#fff" stroke="#c9c9c4" stroke-width="1"/>
<rect x="878.95" y="454.25" width="11.45" height="128.25" fill="#6287f6"/>
<line x1="878.95" y1="454.65" x2="890.40" y2="454.65" stroke="#3d66f0" stroke-width="0.8"/>
<line x1="877.15" y1="452.75" x2="877.15" y2="582.50" stroke="#85857f" stroke-width="1"/>
<rect x="893.20" y="453.50" width="15.05" height="129.00" fill="#fff" stroke="#c9c9c4" stroke-width="1"/>
<rect x="895.00" y="455.25" width="11.45" height="127.25" fill="#6287f6"/>
<line x1="895.00" y1="455.65" x2="906.45" y2="455.65" stroke="#3d66f0" stroke-width="0.8"/>
<line x1="893.20" y1="453.50" x2="893.20" y2="582.50" stroke="#85857f" stroke-width="1"/>
<rect x="909.25" y="464.50" width="15.05" height="118.00" fill="#fff" stroke="#c9c9c4" stroke-width="1"/>
<rect x="911.05" y="466.25" width="11.45" height="116.25" fill="#6287f6"/>
<line x1="911.05" y1="466.65" x2="922.50" y2="466.65" stroke="#3d66f0" stroke-width="0.8"/>
<rect x="925.30" y="441.75" width="15.05" height="140.75" fill="#fff" stroke="#c9c9c4" stroke-width="1"/>
<rect x="927.10" y="443.75" width="11.45" height="138.75" fill="#6287f6"/>
<line x1="927.10" y1="444.15" x2="938.55" y2="444.15" stroke="#3d66f0" stroke-width="0.8"/>
<rect x="941.35" y="441.25" width="15.05" height="141.25" fill="#fff" stroke="#c9c9c4" stroke-width="1"/>
<rect x="943.15" y="443.00" width="11.45" height="139.50" fill="#6287f6"/>
<line x1="943.15" y1="443.40" x2="954.60" y2="443.40" stroke="#3d66f0" stroke-width="0.8"/>
<line x1="941.35" y1="441.25" x2="941.35" y2="582.50" stroke="#85857f" stroke-width="1"/>
<rect x="957.40" y="430.00" width="15.05" height="152.50" fill="#fff" stroke="#c9c9c4" stroke-width="1"/>
<rect x="959.20" y="431.75" width="11.45" height="150.75" fill="#6287f6"/>
<line x1="959.20" y1="432.15" x2="970.65" y2="432.15" stroke="#3d66f0" stroke-width="0.8"/>
<rect x="973.45" y="430.50" width="15.05" height="152.00" fill="#fff" stroke="#c9c9c4" stroke-width="1"/>
<rect x="975.25" y="432.50" width="11.45" height="150.00" fill="#6287f6"/>
<line x1="975.25" y1="432.90" x2="986.70" y2="432.90" stroke="#3d66f0" stroke-width="0.8"/>
<line x1="973.45" y1="430.50" x2="973.45" y2="582.50" stroke="#85857f" stroke-width="1"/>
<rect x="989.50" y="428.75" width="15.05" height="153.75" fill="#fff" stroke="#c9c9c4" stroke-width="1"/>
<rect x="991.30" y="430.00" width="11.45" height="152.50" fill="#6287f6"/>
<line x1="991.30" y1="430.40" x2="1002.75" y2="430.40" stroke="#3d66f0" stroke-width="0.8"/>
<rect x="1005.55" y="440.50" width="15.05" height="142.00" fill="#fff" stroke="#c9c9c4" stroke-width="1"/>
<rect x="1007.35" y="442.50" width="11.45" height="140.00" fill="#6287f6"/>
<line x1="1007.35" y1="442.90" x2="1018.80" y2="442.90" stroke="#3d66f0" stroke-width="0.8"/>
<line x1="551.6" y1="450" x2="1184.5" y2="450" stroke="#3d9b6b" stroke-width="1.5"/>
<polyline points="627.9,449.8 643.9,455.7 660.0,457.1 676.0,470.2 692.1,462.4 708.1,461.3 724.2,473 740.2,470.2 756.3,448.3 772.3,458.75 788.4,435 804.4,433 820.5,443.75 836.5,445 852.6,447.5 868.6,459.5 884.7,453.75 900.7,452.5 916.8,464.5 932.8,464.25 948.9,442.5 964.9,451.25 981.0,427.5 997.0,428.25 1013.1,435" fill="none" stroke="#333" stroke-width="1.4" stroke-linejoin="round"/>
<polyline points="1029.1,431.8 1045.2,425.7 1061.2,430.6 1077.3,423.3 1093.3,418.5 1109.4,422.5 1125.4,415.2 1141.5,411.2 1157.5,415.2" fill="none" stroke="#333" stroke-width="1.3" stroke-dasharray="3.5,2"/>
<polyline points="1013.1,435 1029.1,437.4 1045.2,434.6 1061.2,440.6 1077.3,436.6 1093.3,433.8 1109.4,439.8 1125.4,435.4 1141.5,431.8 1157.5,437.8" fill="none" stroke="#444" stroke-width="1.1" stroke-dasharray="1.2,1.2"/>
<polyline points="1029.1,443.5 1045.2,443.5 1061.2,450.7 1077.3,448.7 1093.3,447.5 1109.4,456.8 1125.4,454 1141.5,452.7 1157.5,461.6" fill="none" stroke="#333" stroke-width="1.3" stroke-dasharray="3.5,2"/>
<text x="579.7" y="593" font-size="7.8" fill="#666" text-anchor="middle" font-weight="400" letter-spacing="-0.2">Jan</text>
<line x1="571.7" y1="582.5" x2="571.7" y2="586" stroke="#ddd" stroke-width="0.6"/>
<text x="595.8" y="593" font-size="7.8" fill="#666" text-anchor="middle" font-weight="400" letter-spacing="-0.2">Feb</text>
<line x1="587.8" y1="582.5" x2="587.8" y2="586" stroke="#ddd" stroke-width="0.6"/>
<text x="611.8" y="593" font-size="7.8" fill="#666" text-anchor="middle" font-weight="400" letter-spacing="-0.2">Mar</text>
<line x1="603.8" y1="582.5" x2="603.8" y2="586" stroke="#ddd" stroke-width="0.6"/>
<text x="627.9" y="593" font-size="7.8" fill="#666" text-anchor="middle" font-weight="400" letter-spacing="-0.2">Apr</text>
<line x1="619.9" y1="582.5" x2="619.9" y2="586" stroke="#ddd" stroke-width="0.6"/>
<text x="643.9" y="593" font-size="7.8" fill="#666" text-anchor="middle" font-weight="400" letter-spacing="-0.2">Ma</text>
<line x1="635.9" y1="582.5" x2="635.9" y2="586" stroke="#ddd" stroke-width="0.6"/>
<text x="660.0" y="593" font-size="7.8" fill="#666" text-anchor="middle" font-weight="400" letter-spacing="-0.2">Jun</text>
<line x1="652.0" y1="582.5" x2="652.0" y2="586" stroke="#ddd" stroke-width="0.6"/>
<text x="676.0" y="593" font-size="7.8" fill="#666" text-anchor="middle" font-weight="400" letter-spacing="-0.2">Jul</text>
<line x1="668.0" y1="582.5" x2="668.0" y2="586" stroke="#ddd" stroke-width="0.6"/>
<text x="692.1" y="593" font-size="7.8" fill="#666" text-anchor="middle" font-weight="400" letter-spacing="-0.2">Aug</text>
<line x1="684.1" y1="582.5" x2="684.1" y2="586" stroke="#ddd" stroke-width="0.6"/>
<text x="708.1" y="593" font-size="7.8" fill="#666" text-anchor="middle" font-weight="400" letter-spacing="-0.2">Sep</text>
<line x1="700.1" y1="582.5" x2="700.1" y2="586" stroke="#ddd" stroke-width="0.6"/>
<text x="724.2" y="593" font-size="7.8" fill="#666" text-anchor="middle" font-weight="400" letter-spacing="-0.2">Oct</text>
<line x1="716.2" y1="582.5" x2="716.2" y2="586" stroke="#ddd" stroke-width="0.6"/>
<text x="740.2" y="593" font-size="7.8" fill="#666" text-anchor="middle" font-weight="400" letter-spacing="-0.2">Nov</text>
<line x1="732.2" y1="582.5" x2="732.2" y2="586" stroke="#ddd" stroke-width="0.6"/>
<text x="756.3" y="593" font-size="7.8" fill="#666" text-anchor="middle" font-weight="400" letter-spacing="-0.2">Dec</text>
<line x1="748.2" y1="582.5" x2="748.2" y2="586" stroke="#ddd" stroke-width="0.6"/>
<text x="772.3" y="593" font-size="7.8" fill="#666" text-anchor="middle" font-weight="400" letter-spacing="-0.2">Jan</text>
<line x1="764.3" y1="582.5" x2="764.3" y2="586" stroke="#ddd" stroke-width="0.6"/>
<text x="788.4" y="593" font-size="7.8" fill="#666" text-anchor="middle" font-weight="400" letter-spacing="-0.2">Feb</text>
<line x1="780.4" y1="582.5" x2="780.4" y2="586" stroke="#ddd" stroke-width="0.6"/>
<text x="804.4" y="593" font-size="7.8" fill="#666" text-anchor="middle" font-weight="400" letter-spacing="-0.2">Ma</text>
<line x1="796.4" y1="582.5" x2="796.4" y2="586" stroke="#ddd" stroke-width="0.6"/>
<text x="820.5" y="593" font-size="7.8" fill="#666" text-anchor="middle" font-weight="400" letter-spacing="-0.2">Apr</text>
<line x1="812.5" y1="582.5" x2="812.5" y2="586" stroke="#ddd" stroke-width="0.6"/>
<text x="836.5" y="593" font-size="7.8" fill="#666" text-anchor="middle" font-weight="400" letter-spacing="-0.2">Ma</text>
<line x1="828.5" y1="582.5" x2="828.5" y2="586" stroke="#ddd" stroke-width="0.6"/>
<text x="852.6" y="593" font-size="7.8" fill="#666" text-anchor="middle" font-weight="400" letter-spacing="-0.2">Jun</text>
<line x1="844.6" y1="582.5" x2="844.6" y2="586" stroke="#ddd" stroke-width="0.6"/>
<text x="868.6" y="593" font-size="7.8" fill="#666" text-anchor="middle" font-weight="400" letter-spacing="-0.2">Jul</text>
<line x1="860.6" y1="582.5" x2="860.6" y2="586" stroke="#ddd" stroke-width="0.6"/>
<text x="884.7" y="593" font-size="7.8" fill="#666" text-anchor="middle" font-weight="400" letter-spacing="-0.2">Au</text>
<line x1="876.7" y1="582.5" x2="876.7" y2="586" stroke="#ddd" stroke-width="0.6"/>
<text x="900.7" y="593" font-size="7.8" fill="#666" text-anchor="middle" font-weight="400" letter-spacing="-0.2">Sep</text>
<line x1="892.7" y1="582.5" x2="892.7" y2="586" stroke="#ddd" stroke-width="0.6"/>
<text x="916.8" y="593" font-size="7.8" fill="#666" text-anchor="middle" font-weight="400" letter-spacing="-0.2">Oct</text>
<line x1="908.8" y1="582.5" x2="908.8" y2="586" stroke="#ddd" stroke-width="0.6"/>
<text x="932.8" y="593" font-size="7.8" fill="#666" text-anchor="middle" font-weight="400" letter-spacing="-0.2">No</text>
<line x1="924.8" y1="582.5" x2="924.8" y2="586" stroke="#ddd" stroke-width="0.6"/>
<text x="948.9" y="593" font-size="7.8" fill="#666" text-anchor="middle" font-weight="400" letter-spacing="-0.2">Dec</text>
<line x1="940.9" y1="582.5" x2="940.9" y2="586" stroke="#ddd" stroke-width="0.6"/>
<text x="964.9" y="593" font-size="7.8" fill="#666" text-anchor="middle" font-weight="400" letter-spacing="-0.2">Jan</text>
<line x1="956.9" y1="582.5" x2="956.9" y2="586" stroke="#ddd" stroke-width="0.6"/>
<text x="981.0" y="593" font-size="7.8" fill="#666" text-anchor="middle" font-weight="400" letter-spacing="-0.2">Feb</text>
<line x1="973.0" y1="582.5" x2="973.0" y2="586" stroke="#ddd" stroke-width="0.6"/>
<text x="997.0" y="593" font-size="7.8" fill="#666" text-anchor="middle" font-weight="400" letter-spacing="-0.2">Mar</text>
<line x1="989.0" y1="582.5" x2="989.0" y2="586" stroke="#ddd" stroke-width="0.6"/>
<text x="1013.1" y="593" font-size="7.8" fill="#666" text-anchor="middle" font-weight="400" letter-spacing="-0.2">Apr</text>
<line x1="1005.1" y1="582.5" x2="1005.1" y2="586" stroke="#ddd" stroke-width="0.6"/>
<text x="1029.1" y="593" font-size="7.8" fill="#666" text-anchor="middle" font-weight="400" letter-spacing="-0.2">Ma</text>
<line x1="1021.1" y1="582.5" x2="1021.1" y2="586" stroke="#ddd" stroke-width="0.6"/>
<text x="1045.2" y="593" font-size="7.8" fill="#666" text-anchor="middle" font-weight="400" letter-spacing="-0.2">Jun</text>
<line x1="1037.2" y1="582.5" x2="1037.2" y2="586" stroke="#ddd" stroke-width="0.6"/>
<text x="1061.2" y="593" font-size="7.8" fill="#666" text-anchor="middle" font-weight="400" letter-spacing="-0.2">Jul</text>
<line x1="1053.2" y1="582.5" x2="1053.2" y2="586" stroke="#ddd" stroke-width="0.6"/>
<text x="1077.3" y="593" font-size="7.8" fill="#666" text-anchor="middle" font-weight="400" letter-spacing="-0.2">Aug</text>
<line x1="1069.2" y1="582.5" x2="1069.2" y2="586" stroke="#ddd" stroke-width="0.6"/>
<text x="1093.3" y="593" font-size="7.8" fill="#666" text-anchor="middle" font-weight="400" letter-spacing="-0.2">Sep</text>
<line x1="1085.3" y1="582.5" x2="1085.3" y2="586" stroke="#ddd" stroke-width="0.6"/>
<text x="1109.4" y="593" font-size="7.8" fill="#666" text-anchor="middle" font-weight="400" letter-spacing="-0.2">Oct</text>
<line x1="1101.3" y1="582.5" x2="1101.3" y2="586" stroke="#ddd" stroke-width="0.6"/>
<text x="1125.4" y="593" font-size="7.8" fill="#666" text-anchor="middle" font-weight="400" letter-spacing="-0.2">Nov</text>
<line x1="1117.4" y1="582.5" x2="1117.4" y2="586" stroke="#ddd" stroke-width="0.6"/>
<text x="1141.5" y="593" font-size="7.8" fill="#666" text-anchor="middle" font-weight="400" letter-spacing="-0.2">Dec</text>
<line x1="1133.5" y1="582.5" x2="1133.5" y2="586" stroke="#ddd" stroke-width="0.6"/>
<text x="1157.5" y="593" font-size="7.8" fill="#666" text-anchor="middle" font-weight="400" letter-spacing="-0.2">Jan</text>
<line x1="1149.5" y1="582.5" x2="1149.5" y2="586" stroke="#ddd" stroke-width="0.6"/>
<line x1="1165" y1="582.5" x2="1165" y2="586" stroke="#ddd" stroke-width="0.6"/>
<line x1="580" y1="595.8" x2="755.8" y2="595.8" stroke="#d8dbe3" stroke-width="0.7"/>
<line x1="772" y1="595.8" x2="948" y2="595.8" stroke="#d8dbe3" stroke-width="0.7"/>
<line x1="965" y1="595.8" x2="1141" y2="595.8" stroke="#d8dbe3" stroke-width="0.7"/>
<text x="667.5" y="605" font-size="7.6" fill="#666" text-anchor="middle" font-weight="400" >2015</text>
<text x="859" y="605" font-size="7.6" fill="#666" text-anchor="middle" font-weight="400" >2016</text>
<text x="1051" y="605" font-size="7.6" fill="#666" text-anchor="middle" font-weight="400" >2017</text>
<text x="1154.5" y="605" font-size="7.6" fill="#666" text-anchor="middle" font-weight="400" >2018</text>
<clipPath id="mapclip"><rect x="45.9" y="138.5" width="444.1" height="471.29999999999995"/></clipPath>
<g clip-path="url(#mapclip)">
<rect x="45.9" y="138.5" width="444.1" height="471.29999999999995" fill="#f7f7f6"/>
<polygon points="46.0,182.2 51.4,190.3 56.9,197.1 60.9,208.0 65.0,224.3 67.7,240.5 66.3,254.1 63.6,267.7 58.2,277.2 53.6,279.9 62.3,278.5 67.7,273.1 78.6,270.4 89.4,273.1 100.3,281.2 111.1,292.1 122.0,301.5 132.0,307.0 146.0,313.5 160.0,318.8 172.0,322.7 178.4,321.3 184.0,330.0 178.0,339.0 160.0,340.0 150.0,338.0 153.3,341.0 157.0,360.0 160.7,374.0 168.1,403.6 175.5,418.4 188.4,448.0 194.0,477.6 197.7,496.0 205.1,514.6 214.3,529.4 227.3,544.2 242.0,559.0 253.2,570.0 271.7,575.6 290.2,581.2 305.0,588.6 316.1,599.7 327.2,610.0 46.0,610.0" fill="#d4d8db"/>
<polygon points="172.5,256.0 173.3,244.4 177.9,239.7 187.2,237.4 195.0,235.9 202.7,239.7 210.5,245.2 215.1,249.8 219.8,256.0 227.5,260.7 240.0,262.0 240.0,264.5 222.9,270.0 212.0,274.6 204.3,276.9 202.7,280.8 196.5,286.2 190.5,290.1 189.5,297.1 192.5,310.2 206.6,313.3 222.0,313.3 220.7,324.4 219.7,332.4 222.0,340.0 226.2,352.2 236.0,362.0 241.8,361.0 246.0,368.4 250.2,376.7 253.0,383.7 253.0,392.1 254.4,401.8 255.8,408.8 261.4,415.8 266.9,418.6 272.5,420.0 278.1,425.0 279.0,437.0 272.0,439.5 262.0,436.0 255.8,428.0 250.2,420.0 244.6,415.8 239.0,410.2 232.1,404.6 220.9,401.8 208.0,396.0 203.4,389.1 199.1,382.6 196.9,373.9 198.0,366.3 203.4,357.6 201.3,350.0 195.0,339.0 178.0,339.0 184.0,330.0 178.4,321.3 185.4,316.3 186.5,312.3 180.4,306.2 172.3,300.2 168.3,295.1 172.3,290.1 174.0,287.0 181.0,285.5 182.6,282.4 174.8,274.6 173.3,265.3" fill="#d4d8db"/>
<polygon points="258.7,264.0 266.7,250.7 274.7,241.3 284.0,238.7 288.7,244.0 285.3,249.3 280.0,252.0 284.0,256.0 296.0,256.0 305.3,256.0 306.7,260.0 314.7,258.7 321.3,257.3 326.7,258.7 333.3,257.3 341.3,253.3 352.0,246.7 353.3,249.3 344.0,260.0 336.0,266.7 346.7,266.7 356.0,272.0 354.7,276.0 344.0,274.7 333.3,270.7 325.3,268.0 317.3,269.3 312.0,266.7 304.0,265.3 293.3,264.0 280.0,262.7 266.7,264.0 250.0,265.5 240.0,264.5 240.0,262.0 250.0,262.5" fill="#d4d8db"/>
<polygon points="368.7,263.0 376.0,259.0 381.3,264.0 379.0,272.0 371.0,270.0" fill="#d4d8db"/>
<path d="M59.6 209.3 L94.8 251.4" stroke="#d4d8db" stroke-width="2"/>
<polygon points="471.5,540.0 480.0,533.0 490.0,535.0 490.0,559.0 478.0,556.0" fill="#d4d8db"/>
<path d="M321.6 138 L282.8 175 L268 200.9 L253.2 223.1 L238.4 249 L227.3 278.6 L219.9 297.1 L222 320 L238.4 330.4" fill="none" stroke="#e2e2e2" stroke-width="1"/>
<path d="M416 138 L434.5 175 L449.3 204.6 L456.7 234.2 L453 286 L445.6 323 L438.2 374" fill="none" stroke="#e2e2e2" stroke-width="1"/>
<path d="M367.9 138 L379 175 L390.1 249 L401.2 293.4 L416 345.2 L430.8 374 L453 429.5 L490 466.5" fill="none" stroke="#e2e2e2" stroke-width="1"/>
<path d="M238.4 330.4 L275.4 337.8 L327.2 352.6 L379 356.3 L430.8 360 L490 366" fill="none" stroke="#e2e2e2" stroke-width="1"/>
<path d="M122 160 L131.1 182.4 L134.8 230.5 L157 260.1 L168.1 293.4 L179.2 323" fill="none" stroke="#e2e2e2" stroke-width="1"/>
<path d="M253.2 223.1 L260.6 260.1 L268 304.5 L286.5 337.8 L305 374" fill="none" stroke="#e2e2e2" stroke-width="1"/>
<path d="M245.8 374 L275.4 411 L305 455.4 L334.6 492.4 L360.5 529.4 L379 566.4 L390.1 610" fill="none" stroke="#e2e2e2" stroke-width="1"/>
<path d="M194 396.2 L223.6 429.5 L253.2 459.1 L282.8 477.6 L305 485" fill="none" stroke="#e2e2e2" stroke-width="1"/>
<path d="M305 485 L286.5 522 L275.4 551.6 L278.4 573.8" fill="none" stroke="#e2e2e2" stroke-width="1"/>
<path d="M381.6 560.8 L416 551.6 L453 540.5 L490 533" fill="none" stroke="#e2e2e2" stroke-width="1"/>
<path d="M163 138 L170 170 L178 192 L200 215 L216 240" fill="none" stroke="#e2e2e2" stroke-width="1"/>
<path d="M300 280 L330 282 L360 292 L400 300 L450 305 L490 300" fill="none" stroke="#e2e2e2" stroke-width="1"/>
<path d="M57 185.7 L90 180.2 L112.1 196.8 L134.1 211.4 L156.2 222.5 L170.9 226.1 L185.5 215.1" fill="none" stroke="#e3b8bb" stroke-width="0.7" stroke-dasharray="1.2,1.5"/>
<path d="M200.2 138 L207.6 167.4 L222.3 182.1 L229.6 200.4 L218.6 222.5 L222.3 233.5" fill="none" stroke="#e3b8bb" stroke-width="0.7" stroke-dasharray="1.2,1.5"/>
<path d="M355.4 138 L355.4 187 L380.6 187 L380.6 183" fill="none" stroke="#e3b8bb" stroke-width="0.7" stroke-dasharray="1.2,1.5"/>
<path d="M420.8 208.3 L433.3 212.1 L458.5 205.8 L490 210" fill="none" stroke="#e3b8bb" stroke-width="0.7" stroke-dasharray="1.2,1.5"/>
<path d="M330 348.5 L379.7 339.6 L404.5 337.1" fill="none" stroke="#e3b8bb" stroke-width="0.7" stroke-dasharray="1.2,1.5"/>
<path d="M387.1 357 L387.1 424 L330 425" fill="none" stroke="#e3b8bb" stroke-width="0.7" stroke-dasharray="1.2,1.5"/>
<path d="M387.1 424 L404.5 426.4 L419.4 453.7 L421.9 483.5 L424.4 518.2 L464.2 528.1 L461.7 577.8 L419.4 576.8 L404.5 587.7 L409.5 610" fill="none" stroke="#e3b8bb" stroke-width="0.7" stroke-dasharray="1.2,1.5"/>
<path d="M404.5 426.4 L454.2 379.3 L490 344.6" fill="none" stroke="#e3b8bb" stroke-width="0.7" stroke-dasharray="1.2,1.5"/>
<path d="M250 450 L270 470 L300 505 L330 510 L360 540 L400 560" fill="none" stroke="#e3b8bb" stroke-width="0.7" stroke-dasharray="1.2,1.5"/>
<path d="M255 300 L290 340 L330 348.5" fill="none" stroke="#e3b8bb" stroke-width="0.7" stroke-dasharray="1.2,1.5"/>
<text x="137.5" y="155" font-size="7.6" fill="#97a1b3" text-anchor="middle" font-weight="400" textLength="24.1" lengthAdjust="spacingAndGlyphs" >ROSA</text>
<text x="126.1" y="183" font-size="6.8" fill="#97a1b3" text-anchor="middle" font-weight="400" textLength="38.2" lengthAdjust="spacingAndGlyphs" >Rohnert Park</text>
<text x="203.8" y="165" font-size="6.5" fill="#97a1b3" text-anchor="middle" font-weight="400" textLength="28.4" lengthAdjust="spacingAndGlyphs" >Yountville</text>
<text x="181.4" y="197" font-size="6.9" fill="#97a1b3" text-anchor="middle" font-weight="400" textLength="26.6" lengthAdjust="spacingAndGlyphs" >Sonoma</text>
<text x="216.2" y="196" font-size="6.9" fill="#97a1b3" text-anchor="middle" font-weight="400" textLength="7.4" lengthAdjust="spacingAndGlyphs" >Na</text>
<text x="288.4" y="178" font-size="6.9" fill="#97a1b3" text-anchor="middle" font-weight="400" textLength="27.3" lengthAdjust="spacingAndGlyphs" >Vacaville</text>
<text x="276.9" y="209" font-size="6.9" fill="#97a1b3" text-anchor="middle" font-weight="400" textLength="25.2" lengthAdjust="spacingAndGlyphs" >Fairfield</text>
<text x="429" y="163" font-size="6.9" fill="#97a1b3" text-anchor="middle" font-weight="400" textLength="29.6" lengthAdjust="spacingAndGlyphs" >Elk Grove</text>
<text x="140.7" y="214" font-size="7.2" fill="#97a1b3" text-anchor="middle" font-weight="400" textLength="30.4" lengthAdjust="spacingAndGlyphs" >Petaluma</text>
<text x="156.4" y="250" font-size="6.5" fill="#97a1b3" text-anchor="middle" font-weight="400" textLength="19.6" lengthAdjust="spacingAndGlyphs" >Novato</text>
<text x="226.8" y="252" font-size="7.8" fill="#97a1b3" text-anchor="middle" font-weight="400" textLength="30.7" lengthAdjust="spacingAndGlyphs" >VALLEJO</text>
<text x="444.7" y="208" font-size="6.5" fill="#97a1b3" text-anchor="middle" font-weight="400" textLength="11.5" lengthAdjust="spacingAndGlyphs" >Galt</text>
<text x="448.1" y="242.5" font-size="6.9" fill="#97a1b3" text-anchor="middle" font-weight="400" textLength="11.1" lengthAdjust="spacingAndGlyphs" >Lodi</text>
<text x="329.6" y="280" font-size="7.4" fill="#97a1b3" text-anchor="middle" font-weight="400" textLength="24.8" lengthAdjust="spacingAndGlyphs" >Antioch</text>
<text x="354.8" y="301.5" font-size="6.9" fill="#97a1b3" text-anchor="middle" font-weight="400" textLength="31.5" lengthAdjust="spacingAndGlyphs" >Brentwood</text>
<text x="446.9" y="295" font-size="8.6" fill="#97a1b3" text-anchor="middle" font-weight="400" textLength="45.5" lengthAdjust="spacingAndGlyphs" >STOCKTON</text>
<text x="206.6" y="300" font-size="7.4" fill="#97a1b3" text-anchor="middle" font-weight="400" textLength="32.6" lengthAdjust="spacingAndGlyphs" >Richmond</text>
<text x="223.6" y="319" font-size="7.8" fill="#a9b1c0" text-anchor="middle" font-weight="400" textLength="37" lengthAdjust="spacingAndGlyphs" >BERKELEY</text>
<text x="450" y="333" font-size="6.9" fill="#97a1b3" text-anchor="middle" font-weight="400" textLength="22.2" lengthAdjust="spacingAndGlyphs" >Lathrop</text>
<text x="465" y="339.5" font-size="7.2" fill="#97a1b3" text-anchor="middle" font-weight="400" textLength="26.3" lengthAdjust="spacingAndGlyphs" >Manteca</text>
<text x="190.3" y="346" font-size="8.8" fill="#97a1b3" text-anchor="middle" font-weight="400" textLength="74" lengthAdjust="spacingAndGlyphs" >SAN FRANCISCO</text>
<text x="295.7" y="349.5" font-size="6.9" fill="#97a1b3" text-anchor="middle" font-weight="400" textLength="31.9" lengthAdjust="spacingAndGlyphs" >San Ramon</text>
<text x="417" y="357" font-size="6.9" fill="#97a1b3" text-anchor="middle" font-weight="400" textLength="16.7" lengthAdjust="spacingAndGlyphs" >Tracy</text>
<text x="180.1" y="370.5" font-size="6.9" fill="#97a1b3" text-anchor="middle" font-weight="400" textLength="24" lengthAdjust="spacingAndGlyphs" >Daly City</text>
<text x="338" y="373" font-size="6.9" fill="#97a1b3" text-anchor="middle" font-weight="400" textLength="32.5" lengthAdjust="spacingAndGlyphs" >Livermore</text>
<text x="190.7" y="381.5" font-size="6.9" fill="#97a1b3" text-anchor="middle" font-weight="400" textLength="63.6" lengthAdjust="spacingAndGlyphs" >South San Francisco</text>
<text x="211.6" y="408" font-size="7.8" fill="#a9b1c0" text-anchor="middle" font-weight="400" textLength="42.5" lengthAdjust="spacingAndGlyphs" >SAN MATEO</text>
<text x="288" y="411.5" font-size="6.9" fill="#97a1b3" text-anchor="middle" font-weight="400" textLength="26.6" lengthAdjust="spacingAndGlyphs" >Fremont</text>
<text x="262.5" y="377" font-size="6.9" fill="#97a1b3" text-anchor="middle" font-weight="400" textLength="27" lengthAdjust="spacingAndGlyphs" >Hayward</text>
<text x="253.2" y="457" font-size="6.9" fill="#97a1b3" text-anchor="middle" font-weight="400" textLength="20.4" lengthAdjust="spacingAndGlyphs" >Mount</text>
<text x="295.7" y="467" font-size="6.9" fill="#97a1b3" text-anchor="middle" font-weight="400" textLength="34.8" lengthAdjust="spacingAndGlyphs" >Santa Clara</text>
<text x="364.6" y="531" font-size="6.9" fill="#97a1b3" text-anchor="middle" font-weight="400" textLength="32.6" lengthAdjust="spacingAndGlyphs" >Morgan Hill</text>
<text x="280" y="554.5" font-size="6.9" fill="#97a1b3" text-anchor="middle" font-weight="400" textLength="38" lengthAdjust="spacingAndGlyphs" >Scotts Valley</text>
<text x="278.7" y="577" font-size="8.6" fill="#97a1b3" text-anchor="middle" font-weight="400" textLength="52.5" lengthAdjust="spacingAndGlyphs" >SANTA CRUZ</text>
<text x="384.6" y="567" font-size="7.2" fill="#97a1b3" text-anchor="middle" font-weight="400" textLength="18.5" lengthAdjust="spacingAndGlyphs" >Gilroy</text>
<text x="341.4" y="594" font-size="6.7" fill="#97a1b3" text-anchor="middle" font-weight="400" textLength="32.2" lengthAdjust="spacingAndGlyphs" >Watsonville</text>
<text x="421.9" y="610" font-size="6.9" fill="#97a1b3" text-anchor="middle" font-weight="400" textLength="23.3" lengthAdjust="spacingAndGlyphs" >Hollister</text>
<circle cx="86.7" cy="159.1" r="3.1" fill="#f08a4b" stroke="#fff" stroke-width="0.7"/>
<circle cx="131.8" cy="147.25" r="3.1" fill="#f08a4b" stroke="#fff" stroke-width="0.7"/>
<circle cx="150.7" cy="152.8" r="3.1" fill="#f08a4b" stroke="#fff" stroke-width="0.7"/>
<circle cx="163.7" cy="170.6" r="3.1" fill="#f08a4b" stroke="#fff" stroke-width="0.7"/>
<circle cx="126.3" cy="180.5" r="3.1" fill="#f08a4b" stroke="#fff" stroke-width="0.7"/>
<circle cx="178.1" cy="192.8" r="3.1" fill="#f08a4b" stroke="#fff" stroke-width="0.7"/>
<circle cx="210.7" cy="184.25" r="3.1" fill="#f08a4b" stroke="#fff" stroke-width="0.7"/>
<circle cx="135.9" cy="205.7" r="3.1" fill="#f08a4b" stroke="#fff" stroke-width="0.7"/>
<circle cx="94.1" cy="247.2" r="3.1" fill="#f08a4b" stroke="#fff" stroke-width="0.7"/>
<circle cx="151.1" cy="246.4" r="3.1" fill="#f08a4b" stroke="#fff" stroke-width="0.7"/>
<circle cx="228" cy="232" r="3.1" fill="#f08a4b" stroke="#fff" stroke-width="0.7"/>
<circle cx="238" cy="246.4" r="3.1" fill="#f08a4b" stroke="#fff" stroke-width="0.7"/>
<circle cx="252.5" cy="219.4" r="3.1" fill="#f08a4b" stroke="#fff" stroke-width="0.7"/>
<circle cx="287.2" cy="173.9" r="3.1" fill="#f08a4b" stroke="#fff" stroke-width="0.7"/>
<circle cx="282.1" cy="196.1" r="3.1" fill="#f08a4b" stroke="#fff" stroke-width="0.7"/>
<circle cx="272.4" cy="202.4" r="3.1" fill="#f08a4b" stroke="#fff" stroke-width="0.7"/>
<circle cx="282.8" cy="204.6" r="3.1" fill="#f08a4b" stroke="#fff" stroke-width="0.7"/>
<circle cx="362" cy="233.1" r="3.1" fill="#f08a4b" stroke="#fff" stroke-width="0.7"/>
<circle cx="226.2" cy="274.9" r="3.1" fill="#f08a4b" stroke="#fff" stroke-width="0.7"/>
<circle cx="260.6" cy="279.3" r="3.1" fill="#f08a4b" stroke="#fff" stroke-width="0.7"/>
<circle cx="280.6" cy="285.3" r="3.1" fill="#f08a4b" stroke="#fff" stroke-width="0.7"/>
<circle cx="306.5" cy="273.8" r="3.1" fill="#f08a4b" stroke="#fff" stroke-width="0.7"/>
<circle cx="330.2" cy="281.2" r="3.1" fill="#f08a4b" stroke="#fff" stroke-width="0.7"/>
<circle cx="350.5" cy="289.3" r="3.1" fill="#f08a4b" stroke="#fff" stroke-width="0.7"/>
<circle cx="271" cy="294.5" r="3.1" fill="#f08a4b" stroke="#fff" stroke-width="0.7"/>
<circle cx="279.1" cy="304.5" r="3.1" fill="#f08a4b" stroke="#fff" stroke-width="0.7"/>
<circle cx="373.1" cy="308.6" r="3.1" fill="#f08a4b" stroke="#fff" stroke-width="0.7"/>
<circle cx="411.6" cy="303.8" r="3.1" fill="#f08a4b" stroke="#fff" stroke-width="0.7"/>
<circle cx="251.4" cy="318.2" r="3.1" fill="#f08a4b" stroke="#fff" stroke-width="0.7"/>
<circle cx="288" cy="330.8" r="3.1" fill="#f08a4b" stroke="#fff" stroke-width="0.7"/>
<circle cx="213.2" cy="299" r="3.1" fill="#f08a4b" stroke="#fff" stroke-width="0.7"/>
<circle cx="221.8" cy="323" r="3.1" fill="#f08a4b" stroke="#fff" stroke-width="0.7"/>
<circle cx="237.3" cy="327.8" r="3.1" fill="#f08a4b" stroke="#fff" stroke-width="0.7"/>
<circle cx="173.3" cy="342.6" r="3.1" fill="#f08a4b" stroke="#fff" stroke-width="0.7"/>
<circle cx="172.2" cy="350" r="3.1" fill="#f08a4b" stroke="#fff" stroke-width="0.7"/>
<circle cx="194.7" cy="348.2" r="3.1" fill="#f08a4b" stroke="#fff" stroke-width="0.7"/>
<circle cx="229.5" cy="348.2" r="3.1" fill="#f08a4b" stroke="#fff" stroke-width="0.7"/>
<circle cx="313.1" cy="370.4" r="3.1" fill="#f08a4b" stroke="#fff" stroke-width="0.7"/>
<circle cx="345.7" cy="366.7" r="3.1" fill="#f08a4b" stroke="#fff" stroke-width="0.7"/>
<circle cx="434.1" cy="366.3" r="3.1" fill="#f08a4b" stroke="#fff" stroke-width="0.7"/>
<circle cx="263.6" cy="384" r="3.1" fill="#f08a4b" stroke="#fff" stroke-width="0.7"/>
<circle cx="269.5" cy="384.4" r="3.1" fill="#f08a4b" stroke="#fff" stroke-width="0.7"/>
<circle cx="276.1" cy="388.8" r="3.1" fill="#f08a4b" stroke="#fff" stroke-width="0.7"/>
<circle cx="283.5" cy="397" r="3.1" fill="#f08a4b" stroke="#fff" stroke-width="0.7"/>
<circle cx="268.7" cy="397.3" r="3.1" fill="#f08a4b" stroke="#fff" stroke-width="0.7"/>
<circle cx="198.1" cy="397" r="3.1" fill="#f08a4b" stroke="#fff" stroke-width="0.7"/>
<circle cx="214" cy="414.7" r="3.1" fill="#f08a4b" stroke="#fff" stroke-width="0.7"/>
<circle cx="224" cy="423.2" r="3.1" fill="#f08a4b" stroke="#fff" stroke-width="0.7"/>
<circle cx="229.2" cy="435" r="3.1" fill="#f08a4b" stroke="#fff" stroke-width="0.7"/>
<circle cx="249.9" cy="433.6" r="3.1" fill="#f08a4b" stroke="#fff" stroke-width="0.7"/>
<circle cx="241.4" cy="442.5" r="3.1" fill="#f08a4b" stroke="#fff" stroke-width="0.7"/>
<circle cx="255" cy="444.3" r="3.1" fill="#f08a4b" stroke="#fff" stroke-width="0.7"/>
<circle cx="258.4" cy="458.4" r="3.1" fill="#f08a4b" stroke="#fff" stroke-width="0.7"/>
<circle cx="265.8" cy="465.8" r="3.1" fill="#f08a4b" stroke="#fff" stroke-width="0.7"/>
<circle cx="311.3" cy="453.2" r="3.1" fill="#f08a4b" stroke="#fff" stroke-width="0.7"/>
<circle cx="326.1" cy="462.4" r="3.1" fill="#f08a4b" stroke="#fff" stroke-width="0.7"/>
<circle cx="297.6" cy="468.4" r="3.1" fill="#f08a4b" stroke="#fff" stroke-width="0.7"/>
<circle cx="313.1" cy="469.5" r="3.1" fill="#f08a4b" stroke="#fff" stroke-width="0.7"/>
<circle cx="295" cy="479.1" r="3.1" fill="#f08a4b" stroke="#fff" stroke-width="0.7"/>
<circle cx="310.2" cy="486.8" r="3.1" fill="#f08a4b" stroke="#fff" stroke-width="0.7"/>
<circle cx="302.8" cy="490.2" r="3.1" fill="#f08a4b" stroke="#fff" stroke-width="0.7"/>
<circle cx="279.8" cy="490.9" r="3.1" fill="#f08a4b" stroke="#fff" stroke-width="0.7"/>
<circle cx="336.5" cy="498.3" r="3.1" fill="#f08a4b" stroke="#fff" stroke-width="0.7"/>
<circle cx="215.5" cy="482" r="3.1" fill="#f08a4b" stroke="#fff" stroke-width="0.7"/>
<circle cx="260.6" cy="535.7" r="3.1" fill="#f08a4b" stroke="#fff" stroke-width="0.7"/>
<circle cx="278" cy="552" r="3.1" fill="#f08a4b" stroke="#fff" stroke-width="0.7"/>
<circle cx="292" cy="570.1" r="3.1" fill="#f08a4b" stroke="#fff" stroke-width="0.7"/>
<circle cx="278.4" cy="573.4" r="3.1" fill="#f08a4b" stroke="#fff" stroke-width="0.7"/>
<circle cx="315.7" cy="574.5" r="3.1" fill="#f08a4b" stroke="#fff" stroke-width="0.7"/>
<circle cx="340.5" cy="587.5" r="3.1" fill="#f08a4b" stroke="#fff" stroke-width="0.7"/>
<circle cx="381.6" cy="560.8" r="3.1" fill="#f08a4b" stroke="#fff" stroke-width="0.7"/>
<circle cx="388.3" cy="606.1" r="3.1" fill="#f08a4b" stroke="#fff" stroke-width="0.7"/>
<circle cx="421.9" cy="606.1" r="3.1" fill="#f08a4b" stroke="#fff" stroke-width="0.7"/>
<circle cx="286.5" cy="411.4" r="3.1" fill="#f08a4b" stroke="#fff" stroke-width="0.7"/>
<circle cx="293.2" cy="410.6" r="3.1" fill="#f08a4b" stroke="#fff" stroke-width="0.7"/>
<circle cx="252.7" cy="219.8" r="3.1" fill="#f08a4b" stroke="#fff" stroke-width="0.7"/>
<rect x="120.0" y="160.5" width="15.6" height="15.6" fill="#6387f6" stroke="#fff" stroke-width="0.8"/>
<rect x="120.0" y="160.5" width="15.6" height="1" fill="#2f55d4"/>
<rect x="243.2" y="202.2" width="15.6" height="15.6" fill="#6387f6" stroke="#fff" stroke-width="0.8"/>
<rect x="243.2" y="202.2" width="15.6" height="1" fill="#2f55d4"/>
<rect x="292.0" y="283.7" width="15.6" height="15.6" fill="#6387f6" stroke="#fff" stroke-width="0.8"/>
<rect x="292.0" y="283.7" width="15.6" height="1" fill="#2f55d4"/>
<rect x="221.2" y="315.9" width="15.6" height="15.6" fill="#6387f6" stroke="#fff" stroke-width="0.8"/>
<rect x="221.2" y="315.9" width="15.6" height="1" fill="#2f55d4"/>
<rect x="175.1" y="337.4" width="15.6" height="15.6" fill="#6387f6" stroke="#fff" stroke-width="0.8"/>
<rect x="175.1" y="337.4" width="15.6" height="1" fill="#2f55d4"/>
<rect x="398.5" y="352.9" width="15.6" height="15.6" fill="#6387f6" stroke="#fff" stroke-width="0.8"/>
<rect x="398.5" y="352.9" width="15.6" height="1" fill="#2f55d4"/>
<rect x="271.7" y="366.7" width="15.6" height="15.6" fill="#6387f6" stroke="#fff" stroke-width="0.8"/>
<rect x="271.7" y="366.7" width="15.6" height="1" fill="#2f55d4"/>
<rect x="225.1" y="420.0" width="15.6" height="15.6" fill="#6387f6" stroke="#fff" stroke-width="0.8"/>
<rect x="225.1" y="420.0" width="15.6" height="1" fill="#2f55d4"/>
<rect x="297.5" y="466.3" width="15.6" height="15.6" fill="#6387f6" stroke="#fff" stroke-width="0.8"/>
<rect x="297.5" y="466.3" width="15.6" height="1" fill="#2f55d4"/>
<rect x="333.1" y="566.4" width="15.6" height="15.6" fill="#6387f6" stroke="#fff" stroke-width="0.8"/>
<rect x="333.1" y="566.4" width="15.6" height="1" fill="#2f55d4"/>
<rect x="79.3" y="145.4" width="45.1" height="10.4" fill="#fff" stroke="#9a9a9a" stroke-width="0.8"/>
<line x1="124.4" y1="155.8" x2="125.4" y2="159.3" stroke="#9a9a9a" stroke-width="0.8"/>
<text x="101.8" y="153.5" font-size="8.5" fill="#555" text-anchor="middle" font-weight="400" textLength="37.5" lengthAdjust="spacingAndGlyphs" >Santa Rosa</text>
<rect x="222.5" y="187.0" width="25.6" height="10.3" fill="#fff" stroke="#9a9a9a" stroke-width="0.8"/>
<line x1="248.1" y1="197.3" x2="249.1" y2="200.8" stroke="#9a9a9a" stroke-width="0.8"/>
<text x="235.3" y="195.0" font-size="8.5" fill="#555" text-anchor="middle" font-weight="400" textLength="17.2" lengthAdjust="spacingAndGlyphs" >Napa</text>
<rect x="245.4" y="268.2" width="50.7" height="11.1" fill="#fff" stroke="#9a9a9a" stroke-width="0.8"/>
<line x1="296.1" y1="279.3" x2="297.1" y2="282.8" stroke="#9a9a9a" stroke-width="0.8"/>
<text x="270.8" y="277.0" font-size="8.5" fill="#555" text-anchor="middle" font-weight="400" textLength="42.3" lengthAdjust="spacingAndGlyphs" >Contra Costa</text>
<rect x="191.0" y="301.2" width="35.2" height="10.7" fill="#fff" stroke="#9a9a9a" stroke-width="0.8"/>
<line x1="226.2" y1="311.9" x2="227.2" y2="315.4" stroke="#9a9a9a" stroke-width="0.8"/>
<text x="208.6" y="309.6" font-size="8.5" fill="#555" text-anchor="middle" font-weight="400" textLength="26.8" lengthAdjust="spacingAndGlyphs" >Oakland</text>
<rect x="124.8" y="322.6" width="54.8" height="10.4" fill="#fff" stroke="#9a9a9a" stroke-width="0.8"/>
<line x1="179.6" y1="333.0" x2="180.6" y2="336.5" stroke="#9a9a9a" stroke-width="0.8"/>
<text x="152.2" y="330.7" font-size="8.5" fill="#555" text-anchor="middle" font-weight="400" textLength="45.9" lengthAdjust="spacingAndGlyphs" >San Francisco</text>
<rect x="376.4" y="338.2" width="27.0" height="10.3" fill="#fff" stroke="#9a9a9a" stroke-width="0.8"/>
<line x1="403.4" y1="348.5" x2="404.4" y2="352.0" stroke="#9a9a9a" stroke-width="0.8"/>
<text x="389.9" y="346.2" font-size="8.5" fill="#555" text-anchor="middle" font-weight="400" textLength="19.0" lengthAdjust="spacingAndGlyphs" >Valley</text>
<rect x="241.4" y="352.6" width="34.7" height="10.4" fill="#fff" stroke="#9a9a9a" stroke-width="0.8"/>
<line x1="276.1" y1="363.0" x2="277.1" y2="366.5" stroke="#9a9a9a" stroke-width="0.8"/>
<text x="258.8" y="360.7" font-size="8.5" fill="#555" text-anchor="middle" font-weight="400" textLength="26.8" lengthAdjust="spacingAndGlyphs" >Fremont</text>
<rect x="192.5" y="405.0" width="36.7" height="10.4" fill="#fff" stroke="#9a9a9a" stroke-width="0.8"/>
<line x1="229.2" y1="415.4" x2="230.2" y2="418.9" stroke="#9a9a9a" stroke-width="0.8"/>
<text x="210.8" y="413.1" font-size="8.5" fill="#555" text-anchor="middle" font-weight="400" textLength="28.4" lengthAdjust="spacingAndGlyphs" >Palo Alto</text>
<rect x="263.6" y="451.3" width="38.4" height="10.0" fill="#fff" stroke="#9a9a9a" stroke-width="0.8"/>
<line x1="302.0" y1="461.3" x2="303.0" y2="464.8" stroke="#9a9a9a" stroke-width="0.8"/>
<text x="282.8" y="459.0" font-size="8.5" fill="#555" text-anchor="middle" font-weight="400" textLength="30.0" lengthAdjust="spacingAndGlyphs" >San Jose</text>
<rect x="292.0" y="551.2" width="45.6" height="10.7" fill="#fff" stroke="#9a9a9a" stroke-width="0.8"/>
<line x1="337.6" y1="561.9" x2="338.6" y2="565.4" stroke="#9a9a9a" stroke-width="0.8"/>
<text x="314.8" y="559.6" font-size="8.5" fill="#555" text-anchor="middle" font-weight="400" textLength="36.5" lengthAdjust="spacingAndGlyphs" >Watsonville</text>
<rect x="52.2" y="148" width="20.2" height="19.5" rx="2" fill="#fff" stroke="#eceff3" stroke-width="0.7"/>
<path d="M57.3 154.8 L62.3 152.2 L67.3 154.8 L62.3 157.4 Z" fill="#555" stroke="#555" stroke-width="0.6"/><path d="M57.3 157.3 L62.3 159.9 L67.3 157.3 M57.3 159.8 L62.3 162.4 L67.3 159.8" fill="none" stroke="#555" stroke-width="0.9"/>
<rect x="459.7" y="148.5" width="20" height="19.7" rx="2" fill="#fff" stroke="#eceff3" stroke-width="0.7"/>
<circle cx="469" cy="157.6" r="2.7" fill="none" stroke="#555" stroke-width="1"/><line x1="471" y1="159.6" x2="473" y2="161.6" stroke="#555" stroke-width="1.2"/>
<rect x="459.7" y="178.2" width="20" height="60.3" rx="2" fill="#fff" stroke="#eceff3" stroke-width="0.7"/>
<path d="M467.3 188.3 H472.3 M469.8 185.8 V190.8" stroke="#555" stroke-width="1"/>
<line x1="464" y1="198.3" x2="475.5" y2="198.3" stroke="#e6e6e6" stroke-width="0.7"/>
<path d="M467.3 208.4 H472.3" stroke="#555" stroke-width="1"/>
<line x1="464" y1="218.9" x2="475.5" y2="218.9" stroke="#e6e6e6" stroke-width="0.7"/>
<path d="M465.5 225.7 h1.4 M465.5 225.7 v1.4 M474 225.7 h-1.4 M474 225.7 v1.4 M465.5 233.9 h1.4 M465.5 233.9 v-1.4 M474 233.9 h-1.4 M474 233.9 v-1.4" stroke="#666" stroke-width="0.7"/><circle cx="469.8" cy="229.8" r="1" fill="#666"/>
<rect x="459.7" y="249.8" width="20" height="39" rx="2" fill="#fff" stroke="#eceff3" stroke-width="0.7"/>
<path d="M469.7 255.3 V264.5 M465 259.9 H474.4" stroke="#2a3fc8" stroke-width="1.1"/><path d="M469.7 254.3 l-1.6 2.1 h3.2 z M469.7 265.5 l-1.6 -2.1 h3.2 z M464 259.9 l2.1 -1.6 v3.2 z M475.4 259.9 l-2.1 -1.6 v3.2 z" fill="#2a3fc8"/>
<line x1="464" y1="269.2" x2="475.5" y2="269.2" stroke="#e6e6e6" stroke-width="0.7"/>
<rect x="465" y="275.3" width="9.5" height="9.5" fill="none" stroke="#555" stroke-width="0.8"/><path d="M476 287 l1 1 1-1" fill="none" stroke="#888" stroke-width="0.5"/>
<path d="M352.9 248.6 L365.5 231 L375.5 213.4 L388.1 188.3 L395.6 163.1 L400.7 138" fill="none" stroke="#d9dde0" stroke-width="1"/>
<path d="M357 272 L375 262 L383 250 L395 230 L405 207 L420 200 L440 215 L455 230" fill="none" stroke="#d9dde0" stroke-width="1"/>
<path d="M340 276 L360 285 L380 300 L395 320 L405 340 L420 370 L440 400 L470 440 L490 470" fill="none" stroke="#d9dde0" stroke-width="1"/>
<path d="M56.3 594 V599.2 H108 V594" fill="none" stroke="#4a4f5a" stroke-width="1"/>
<text x="58.8" y="596" font-size="7.8" fill="#666" text-anchor="start" font-weight="400" >20 km</text>
<rect x="462.5" y="582.5" width="14" height="14" rx="2" fill="#fff" stroke="#eceff3" stroke-width="0.7"/>
<circle cx="469.5" cy="589.5" r="2.6" fill="none" stroke="#999" stroke-width="0.8"/>
</g>
<rect x="35" y="620" width="1160" height="19.7" fill="#edf0f8"/>
<rect x="35" y="639.7" width="1160" height="1.5" fill="#aebde6"/>
<rect x="380" y="620" width="95.7" height="19.7" fill="#ffffff"/>
<text x="45" y="632.8" font-size="8.1" fill="#4f5563" text-anchor="start" font-weight="400" textLength="38.8" lengthAdjust="spacingAndGlyphs" >Global View</text>
<path d="M90.4 627.3 L95.6 632.5 M95.6 627.3 L90.4 632.5" stroke="#aaa" stroke-width="0.75"/>
<line x1="104" y1="625" x2="104" y2="635" stroke="#cfd3de" stroke-width="0.8"/>
<text x="114" y="632.8" font-size="8.1" fill="#4f5563" text-anchor="start" font-weight="400" textLength="45" lengthAdjust="spacingAndGlyphs" >Flow Analysis</text>
<path d="M166.4 627.3 L171.6 632.5 M171.6 627.3 L166.4 632.5" stroke="#aaa" stroke-width="0.75"/>
<line x1="179" y1="625" x2="179" y2="635" stroke="#cfd3de" stroke-width="0.8"/>
<text x="190" y="632.8" font-size="8.1" fill="#4f5563" text-anchor="start" font-weight="400" textLength="52" lengthAdjust="spacingAndGlyphs" >Store Clustering</text>
<path d="M249.4 627.3 L254.6 632.5 M254.6 627.3 L249.4 632.5" stroke="#aaa" stroke-width="0.75"/>
<line x1="262" y1="625" x2="262" y2="635" stroke="#cfd3de" stroke-width="0.8"/>
<text x="272" y="632.8" font-size="8.1" fill="#4f5563" text-anchor="start" font-weight="400" textLength="30" lengthAdjust="spacingAndGlyphs" >Waterfall</text>
<path d="M308.4 627.3 L313.6 632.5 M313.6 627.3 L308.4 632.5" stroke="#aaa" stroke-width="0.75"/>
<line x1="322" y1="625" x2="322" y2="635" stroke="#cfd3de" stroke-width="0.8"/>
<text x="332" y="632.8" font-size="8.1" fill="#4f5563" text-anchor="start" font-weight="400" textLength="28" lengthAdjust="spacingAndGlyphs" >Demand</text>
<path d="M366.9 627.3 L372.1 632.5 M372.1 627.3 L366.9 632.5" stroke="#aaa" stroke-width="0.75"/>
<text x="390.4" y="632.8" font-size="8.1" fill="#4f5563" text-anchor="start" font-weight="400" textLength="64.6" lengthAdjust="spacingAndGlyphs" >Demand By Product</text>
<path d="M462.4 627.3 L467.6 632.5 M467.6 627.3 L462.4 632.5" stroke="#aaa" stroke-width="0.75"/>
<text x="486" y="632.8" font-size="8.1" fill="#4f5563" text-anchor="start" font-weight="400" textLength="74.7" lengthAdjust="spacingAndGlyphs" >Promotions by Product</text>
<path d="M567.4 627.3 L572.6 632.5 M572.6 627.3 L567.4 632.5" stroke="#aaa" stroke-width="0.75"/>
<line x1="581" y1="625" x2="581" y2="635" stroke="#cfd3de" stroke-width="0.8"/>
<text x="591" y="632.8" font-size="8.1" fill="#4f5563" text-anchor="start" font-weight="400" textLength="59" lengthAdjust="spacingAndGlyphs" >Promotion Impact</text>
<path d="M657.1 627.3 L662.3000000000001 632.5 M662.3000000000001 627.3 L657.1 632.5" stroke="#aaa" stroke-width="0.75"/>
<line x1="670" y1="625" x2="670" y2="635" stroke="#cfd3de" stroke-width="0.8"/>
<text x="680.7" y="632.8" font-size="8.1" fill="#4f5563" text-anchor="start" font-weight="400" textLength="100" lengthAdjust="spacingAndGlyphs" >Demand Forecast Holt-Winters</text>
<line x1="788" y1="625" x2="788" y2="635" stroke="#cfd3de" stroke-width="0.8"/>
<path d="M806 627 L803.5 629.8 L806 632.6 M827.5 627 L830 629.8 L827.5 632.6" fill="none" stroke="#666" stroke-width="0.8"/>
<path d="M851 629.5 L854 626.5 L857 629.5 M851 633 L854 630 L857 633" fill="none" stroke="#666" stroke-width="0.8"/>
<path d="M879 626 V633.5 M875.3 629.8 H882.7" stroke="#666" stroke-width="0.8"/>
<text x="904" y="632.8" font-size="8.1" fill="#4f5563" text-anchor="start" font-weight="400" textLength="81" lengthAdjust="spacingAndGlyphs" >672,408 of 672,408 rows</text>
<text x="1000" y="632.8" font-size="8.1" fill="#4f5563" text-anchor="start" font-weight="400" textLength="30.7" lengthAdjust="spacingAndGlyphs" >0 marked</text>
<text x="1045.7" y="632.8" font-size="8.1" fill="#4f5563" text-anchor="start" font-weight="400" textLength="38.3" lengthAdjust="spacingAndGlyphs" >54 columns</text>
<text x="1098.7" y="632.8" font-size="8.1" fill="#4f5563" text-anchor="start" font-weight="400" textLength="35.3" lengthAdjust="spacingAndGlyphs" >Daily Sales</text>
<circle cx="1149" cy="626.5" r="0.9" fill="#555"/><circle cx="1149" cy="629.8" r="0.9" fill="#555"/><circle cx="1149" cy="633.1" r="0.9" fill="#555"/>
<line x1="1164.5" y1="625" x2="1164.5" y2="635" stroke="#cfd3de" stroke-width="0.8"/>
<circle cx="1179.6" cy="629.4" r="4.9" fill="#6a6d75"/><path d="M1175 628 H1184.2 M1175 630.8 H1184.2" stroke="#eceff7" stroke-width="0.7"/><ellipse cx="1179.6" cy="629.4" rx="1.9" ry="4.6" fill="none" stroke="#eceff7" stroke-width="0.7"/>
</svg></body></html>
